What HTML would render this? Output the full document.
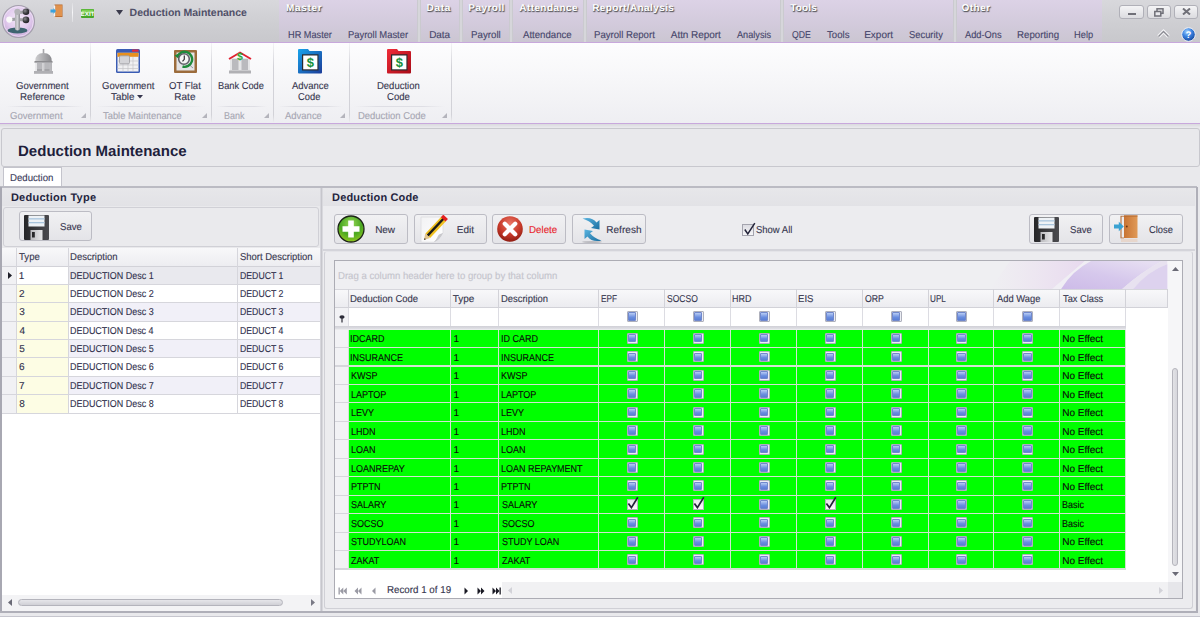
<!DOCTYPE html>
<html><head><meta charset="utf-8"><style>
*{box-sizing:border-box;margin:0;padding:0}
html,body{width:1200px;height:617px;overflow:hidden}
body{position:relative;background:#e9e9ec;font-family:"Liberation Sans",sans-serif;text-rendering:geometricPrecision}
.a{position:absolute}
.t{position:absolute;white-space:nowrap;line-height:1;-webkit-text-stroke:0.12px currentColor}
.grp{position:absolute;top:0;height:42px;background:linear-gradient(#dcd2e6,#d2cadb 60%,#cbc6d2)}
.gsep{position:absolute;top:0;height:42px;width:4px;background:linear-gradient(90deg,#c4c4c9,#dcdce0 50%,#c4c4c9)}
.rsep{position:absolute;top:43px;width:1px;height:80px;background:linear-gradient(#f4f4f6,#d2d2d8 30%,#d2d2d8 90%,#f0f0f2)}
.rfl{position:absolute;top:106px;height:1px;background:linear-gradient(90deg,rgba(222,222,228,0),#dedee4 25%,#dedee4 75%,rgba(222,222,228,0))}
.btn{position:absolute;border:1px solid #bcbcc4;border-radius:3px;background:linear-gradient(#f1f1f3,#e4e4e8)}
</style></head><body>
<div class="a" style="left:0;top:0;width:1200px;height:42px;background:linear-gradient(#d8d8dc,#cfcfd3 50%,#c8c8cc)"></div>
<div class="grp" style="left:279px;width:138px"></div>
<div class="gsep" style="left:417px"></div>
<div class="grp" style="left:421px;width:38px"></div>
<div class="gsep" style="left:459px"></div>
<div class="grp" style="left:463px;width:46px"></div>
<div class="gsep" style="left:509px"></div>
<div class="grp" style="left:513px;width:70px"></div>
<div class="gsep" style="left:583px"></div>
<div class="grp" style="left:587px;width:193px"></div>
<div class="gsep" style="left:780px"></div>
<div class="grp" style="left:784px;width:169px"></div>
<div class="gsep" style="left:953px"></div>
<div class="grp" style="left:957px;width:145px"></div>
<div class="t" style="left:285.95px;top:3.90px;font-size:10px;color:#ffffff;letter-spacing:0.71px;font-weight:bold;-webkit-text-stroke:0;text-shadow:0.5px 1px 1px #5a5a60,1px 0.5px 1px #7a7a80">Master</div>
<div class="t" style="left:426.45px;top:3.90px;font-size:10px;color:#ffffff;letter-spacing:0.77px;font-weight:bold;-webkit-text-stroke:0;text-shadow:0.5px 1px 1px #5a5a60,1px 0.5px 1px #7a7a80">Data</div>
<div class="t" style="left:468.35px;top:3.90px;font-size:10px;color:#ffffff;letter-spacing:0.45px;font-weight:bold;-webkit-text-stroke:0;text-shadow:0.5px 1px 1px #5a5a60,1px 0.5px 1px #7a7a80">Payroll</div>
<div class="t" style="left:519.25px;top:3.90px;font-size:10px;color:#ffffff;letter-spacing:0.42px;font-weight:bold;-webkit-text-stroke:0;text-shadow:0.5px 1px 1px #5a5a60,1px 0.5px 1px #7a7a80">Attendance</div>
<div class="t" style="left:592.15px;top:3.90px;font-size:10px;color:#ffffff;letter-spacing:0.40px;font-weight:bold;-webkit-text-stroke:0;text-shadow:0.5px 1px 1px #5a5a60,1px 0.5px 1px #7a7a80">Report/Analysis</div>
<div class="t" style="left:790.30px;top:3.90px;font-size:10px;color:#ffffff;letter-spacing:0.15px;font-weight:bold;-webkit-text-stroke:0;text-shadow:0.5px 1px 1px #5a5a60,1px 0.5px 1px #7a7a80">Tools</div>
<div class="t" style="left:961.60px;top:3.90px;font-size:10px;color:#ffffff;letter-spacing:0.46px;font-weight:bold;-webkit-text-stroke:0;text-shadow:0.5px 1px 1px #5a5a60,1px 0.5px 1px #7a7a80">Other</div>
<div class="t" style="left:287.96px;top:30.50px;font-size:10px;color:#45456a;transform:scaleX(0.919);transform-origin:0 0">HR Master</div>
<div class="t" style="left:347.55px;top:30.50px;font-size:10px;color:#45456a;transform:scaleX(0.940);transform-origin:0 0">Payroll Master</div>
<div class="t" style="left:429.20px;top:30.50px;font-size:10px;color:#45456a;letter-spacing:-0.10px">Data</div>
<div class="t" style="left:471.22px;top:30.50px;font-size:10px;color:#45456a;transform:scaleX(0.973);transform-origin:0 0">Payroll</div>
<div class="t" style="left:522.50px;top:30.50px;font-size:10px;color:#45456a;transform:scaleX(0.962);transform-origin:0 0">Attendance</div>
<div class="t" style="left:594.23px;top:30.50px;font-size:10px;color:#45456a;transform:scaleX(0.960);transform-origin:0 0">Payroll Report</div>
<div class="t" style="left:670.80px;top:30.50px;font-size:10px;color:#45456a;letter-spacing:-0.05px">Attn Report</div>
<div class="t" style="left:737.00px;top:30.50px;font-size:10px;color:#45456a;transform:scaleX(0.916);transform-origin:0 0">Analysis</div>
<div class="t" style="left:792.41px;top:30.50px;font-size:10px;color:#45456a;transform:scaleX(0.865);transform-origin:0 0">QDE</div>
<div class="t" style="left:827.01px;top:30.50px;font-size:10px;color:#45456a;transform:scaleX(0.965);transform-origin:0 0">Tools</div>
<div class="t" style="left:864.20px;top:30.50px;font-size:10px;color:#45456a;letter-spacing:0.00px">Export</div>
<div class="t" style="left:908.58px;top:30.50px;font-size:10px;color:#45456a;transform:scaleX(0.937);transform-origin:0 0">Security</div>
<div class="t" style="left:965.40px;top:30.50px;font-size:10px;color:#45456a;transform:scaleX(0.926);transform-origin:0 0">Add-Ons</div>
<div class="t" style="left:1017.22px;top:30.50px;font-size:10px;color:#45456a;transform:scaleX(0.969);transform-origin:0 0">Reporting</div>
<div class="t" style="left:1074.26px;top:30.50px;font-size:10px;color:#45456a;transform:scaleX(0.930);transform-origin:0 0">Help</div>
<svg class="a" style="left:0;top:2px" width="40" height="40" viewBox="0 2 40 40">
 <defs><radialGradient id="lg1" cx="0.5" cy="0.4" r="0.6"><stop offset="0" stop-color="#f4eaf8"/><stop offset="0.6" stop-color="#e2ccee"/><stop offset="0.9" stop-color="#cfb2de"/><stop offset="1" stop-color="#c2a6d2"/></radialGradient>
 <linearGradient id="lgt" x1="0" x2="1"><stop offset="0" stop-color="#b0b0b4"/><stop offset="0.5" stop-color="#d0d0d4"/><stop offset="1" stop-color="#8a8a90"/></linearGradient>
 <radialGradient id="lgd" cx="0.35" cy="0.35" r="0.7"><stop offset="0" stop-color="#8a8a8e"/><stop offset="0.6" stop-color="#3a3a3e"/><stop offset="1" stop-color="#202024"/></radialGradient></defs>
 <circle cx="18.5" cy="21.5" r="16" fill="url(#lg1)" stroke="#a4a0ac" stroke-width="1.1"/>
 <circle cx="18.5" cy="21.5" r="14.8" fill="none" stroke="#f6f0fa" stroke-width="0.8" opacity="0.8"/>
 <ellipse cx="17.5" cy="30.4" rx="9.9" ry="3" fill="#3e6470"/>
 <path d="M18 12.5 L25 12 M18 19.5 L25 20 M17 19 L10 19.8" stroke="#a2a2a6" stroke-width="3"/>
 <rect x="15" y="10.5" width="5" height="20" rx="2.5" fill="url(#lgt)"/>
 <circle cx="17.4" cy="11.8" r="3.1" fill="#b4b4b8"/>
 <circle cx="26" cy="11.8" r="3.3" fill="url(#lgd)"/>
 <circle cx="26" cy="19.9" r="3.3" fill="url(#lgd)"/>
 <circle cx="9.3" cy="19.6" r="3.1" fill="#fafafa"/>
</svg>
<svg class="a" style="left:50px;top:4px" width="14" height="15" viewBox="0 0 14 15">
 <rect x="4.5" y="0.5" width="8" height="12.5" fill="#b8682a"/>
 <rect x="5.5" y="1.2" width="6.5" height="11" fill="#e0924e"/>
 <rect x="3.8" y="1.5" width="1.5" height="11" fill="#f2f2f4"/>
 <path d="M0.5 5.5 H3.5 V4 L6 7 L3.5 10 V8.5 H0.5 Z" fill="#3aa2dc"/>
 <rect x="4.5" y="13.2" width="8" height="1.5" fill="#e8cdb8" opacity="0.6"/>
</svg>
<div class="a" style="left:72px;top:3px;width:1px;height:19px;background:linear-gradient(#dcdce0,#f6f6f8 50%,#dcdce0)"></div>
<svg class="a" style="left:80.5px;top:8.5px" width="13" height="9" viewBox="0 0 13 9">
 <rect x="0" y="0" width="13" height="9" rx="1" fill="#46a82a"/><rect x="0.6" y="0.6" width="11.8" height="4" fill="#7cd050"/>
 <text x="6.5" y="7.3" font-size="6.3" font-weight="bold" fill="#fff" text-anchor="middle" font-family="Liberation Sans">EXIT</text>
</svg>
<svg class="a" style="left:115.5px;top:9.5px" width="7" height="5" viewBox="0 0 7 5"><path d="M0 0 H7 L3.5 5 Z" fill="#3a3a4c"/></svg>
<div class="t" style="left:129.62px;top:8.00px;font-size:10.5px;color:#505068;letter-spacing:-0.03px;font-weight:bold;-webkit-text-stroke:0">Deduction Maintenance</div>
<div class="a" style="left:1119px;top:5px;width:25px;height:13.5px;border:1px solid #b0b0b8;border-radius:3px;background:linear-gradient(#f4f4f6,#dcdce0)"></div>
<div class="a" style="left:1146.5px;top:5px;width:24.5px;height:13.5px;border:1px solid #b0b0b8;border-radius:3px;background:linear-gradient(#f4f4f6,#dcdce0)"></div>
<div class="a" style="left:1174px;top:5px;width:24px;height:13.5px;border:1px solid #b0b0b8;border-radius:3px;background:linear-gradient(#f4f4f6,#dcdce0)"></div>
<div class="a" style="left:1128px;top:12.5px;width:8px;height:2.2px;background:#707078"></div>
<svg class="a" style="left:1154px;top:7.5px" width="10" height="9" viewBox="0 0 10 9"><rect x="3" y="0.8" width="6" height="4.5" fill="none" stroke="#707078" stroke-width="1.5"/><rect x="0.8" y="3.5" width="6" height="4.5" fill="#e8e8ec" stroke="#707078" stroke-width="1.5"/></svg>
<svg class="a" style="left:1182px;top:8px" width="9" height="7" viewBox="0 0 9 7"><path d="M1 0.5 L8 6.5 M8 0.5 L1 6.5" stroke="#707078" stroke-width="2"/></svg>
<svg class="a" style="left:1157px;top:29px" width="13" height="9" viewBox="0 0 13 9"><path d="M1.5 7.5 L6.5 2.5 L11.5 7.5" stroke="#f6f6f8" stroke-width="3.4" fill="none"/><path d="M1.5 7.5 L6.5 2.5 L11.5 7.5" stroke="#8a8a92" stroke-width="1.4" fill="none"/></svg>
<svg class="a" style="left:1180.5px;top:26.5px" width="15" height="15" viewBox="0 0 15 15">
 <defs><radialGradient id="hlp" cx="0.4" cy="0.3" r="0.7"><stop offset="0" stop-color="#a0d0ff"/><stop offset="0.5" stop-color="#3a82e0"/><stop offset="1" stop-color="#1a4aa0"/></radialGradient></defs>
 <circle cx="7.5" cy="7.5" r="6.8" fill="url(#hlp)" stroke="#f0f0f4" stroke-width="1"/>
 <text x="7.5" y="11" font-size="9.5" font-weight="bold" fill="#fff" text-anchor="middle" font-family="Liberation Sans">?</text>
</svg>
<div class="a" style="left:0;top:42px;width:1200px;height:1px;background:#c8a8dc"></div>
<div class="a" style="left:0;top:43px;width:1200px;height:80px;background:linear-gradient(#fdfdfe,#f6f6f8 50%,#eeeef2)"></div>
<div class="a" style="left:0;top:123px;width:1200px;height:1px;background:#c8a8dc"></div>
<div class="rsep" style="left:89.5px"></div>
<div class="rsep" style="left:210.5px"></div>
<div class="rsep" style="left:272.5px"></div>
<div class="rsep" style="left:348.5px"></div>
<div class="rsep" style="left:450.5px"></div>
<div class="rfl" style="left:6px;width:78px"></div>
<div class="rfl" style="left:95px;width:110px"></div>
<div class="rfl" style="left:216px;width:51px"></div>
<div class="rfl" style="left:278px;width:65px"></div>
<div class="rfl" style="left:354px;width:91px"></div>
<div class="t" style="left:16.42px;top:81.60px;font-size:10px;color:#36364e;transform:scaleX(0.957);transform-origin:0 0">Government</div>
<div class="t" style="left:19.72px;top:92.90px;font-size:10px;color:#36364e;transform:scaleX(0.972);transform-origin:0 0">Reference</div>
<div class="t" style="left:102.02px;top:81.60px;font-size:10px;color:#36364e;transform:scaleX(0.951);transform-origin:0 0">Government</div>
<div class="t" style="left:111.40px;top:92.90px;font-size:10px;color:#36364e;transform:scaleX(0.983);transform-origin:0 0">Table</div>
<svg class="a" style="left:137px;top:94.5px" width="6" height="4" viewBox="0 0 6 4"><path d="M0 0 H6 L3 3.5 Z" fill="#36364e"/></svg>
<div class="t" style="left:169.17px;top:81.60px;font-size:10px;color:#36364e;transform:scaleX(0.959);transform-origin:0 0">OT Flat</div>
<div class="t" style="left:174.20px;top:92.90px;font-size:10px;color:#36364e;letter-spacing:0.07px">Rate</div>
<div class="t" style="left:217.56px;top:81.60px;font-size:10px;color:#36364e;transform:scaleX(0.928);transform-origin:0 0">Bank Code</div>
<div class="t" style="left:291.70px;top:81.60px;font-size:10px;color:#36364e;transform:scaleX(0.945);transform-origin:0 0">Advance</div>
<div class="t" style="left:298.03px;top:92.90px;font-size:10px;color:#36364e;transform:scaleX(0.935);transform-origin:0 0">Code</div>
<div class="t" style="left:376.94px;top:81.60px;font-size:10px;color:#36364e;transform:scaleX(0.948);transform-origin:0 0">Deduction</div>
<div class="t" style="left:386.52px;top:92.90px;font-size:10px;color:#36364e;transform:scaleX(0.957);transform-origin:0 0">Code</div>
<div class="t" style="left:10.42px;top:112.20px;font-size:10px;color:#a6a6b2;transform:scaleX(0.955);transform-origin:0 0">Government</div>
<div class="t" style="left:103.31px;top:112.20px;font-size:10px;color:#a6a6b2;transform:scaleX(0.938);transform-origin:0 0">Table Maintenance</div>
<div class="t" style="left:223.88px;top:112.20px;font-size:10px;color:#a6a6b2;transform:scaleX(0.900);transform-origin:0 0">Bank</div>
<div class="t" style="left:285.40px;top:112.20px;font-size:10px;color:#a6a6b2;transform:scaleX(0.948);transform-origin:0 0">Advance</div>
<div class="t" style="left:357.74px;top:112.20px;font-size:10px;color:#a6a6b2;transform:scaleX(0.946);transform-origin:0 0">Deduction Code</div>
<svg class="a" style="left:80.5px;top:113px" width="5" height="5"><path d="M5 0 V5 H0 Z" fill="#b4b4bc"/></svg>
<svg class="a" style="left:202px;top:113px" width="5" height="5"><path d="M5 0 V5 H0 Z" fill="#b4b4bc"/></svg>
<svg class="a" style="left:264px;top:113px" width="5" height="5"><path d="M5 0 V5 H0 Z" fill="#b4b4bc"/></svg>
<svg class="a" style="left:340px;top:113px" width="5" height="5"><path d="M5 0 V5 H0 Z" fill="#b4b4bc"/></svg>
<svg class="a" style="left:442px;top:113px" width="5" height="5"><path d="M5 0 V5 H0 Z" fill="#b4b4bc"/></svg>
<svg class="a" style="left:33.5px;top:49px" width="19" height="25" viewBox="0 0 19 25">
 <defs><linearGradient id="gdm" x1="0" x2="1"><stop offset="0" stop-color="#cfcfd1"/><stop offset="0.5" stop-color="#acacaf"/><stop offset="1" stop-color="#8a8a8e"/></linearGradient>
 <linearGradient id="gcl" x1="0" x2="1"><stop offset="0" stop-color="#ececee"/><stop offset="1" stop-color="#b4b4b8"/></linearGradient></defs>
 <rect x="8.7" y="0" width="1.6" height="5" fill="#a6a6aa"/>
 <path d="M1.2 12.5 Q1.2 4 9.5 4 Q17.8 4 17.8 12.5 Z" fill="url(#gdm)"/>
 <rect x="0.5" y="12" width="18" height="1.8" fill="#8c8c90"/>
 <rect x="1" y="13.8" width="17" height="8.5" fill="url(#gcl)"/>
 <rect x="3" y="14" width="5" height="8" fill="#b8b8bc"/>
 <rect x="10.5" y="14" width="5" height="8" fill="#b8b8bc"/>
 <rect x="3" y="20.5" width="5" height="1" fill="#909094"/><rect x="10.5" y="20.5" width="5" height="1" fill="#909094"/>
 <rect x="0" y="22" width="19" height="2.8" fill="#b0b0b4"/>
</svg>
<svg class="a" style="left:116px;top:49px" width="24" height="24" viewBox="0 0 24 24">
 <rect x="0" y="0" width="24" height="24" rx="1.5" fill="#3a5cb4"/>
 <rect x="16" y="0.5" width="6.5" height="2.2" fill="#e42a3c"/>
 <rect x="1.5" y="3.8" width="21" height="18.7" fill="#f0f0f2"/>
 <rect x="1.5" y="3.8" width="21" height="4" fill="#e8901e"/>
 <path d="M1.5 12 H22.5 M1.5 16 H22.5 M1.5 19.5 H22.5 M7 8 V22.5 M12 8 V22.5 M17 8 V22.5" stroke="#c4c4c8" stroke-width="0.7"/>
 <rect x="3.5" y="6.8" width="10" height="8" rx="1.2" fill="#d4d4d8" stroke="#9a9aa0" stroke-width="0.8"/>
</svg>
<svg class="a" style="left:174px;top:50px" width="23" height="23" viewBox="0 0 23 23">
 <rect x="0" y="0" width="23" height="23" rx="1" fill="#9c6c3c"/>
 <rect x="2.5" y="2.5" width="18" height="18" fill="#e4e4e6"/>
 <path d="M15.5 15 L19 18" stroke="#9a9aa0" stroke-width="1"/>
 <path d="M3.5 7 A7.5 7.5 0 1 1 8.5 16.5" stroke="#1e8a3a" stroke-width="2.4" fill="none"/>
 <path d="M0.5 5.5 L5 3.5 L5 9 Z" fill="#1e8a3a"/>
 <circle cx="10" cy="9" r="5.3" fill="#f6f6f6" stroke="#606068" stroke-width="1.6"/>
 <path d="M10.3 5.5 V9.3 L8.5 11.3" stroke="#333" stroke-width="1.2" fill="none"/>
</svg>
<svg class="a" style="left:228px;top:49px" width="24" height="25" viewBox="0 0 24 25">
 <rect x="2" y="9" width="20" height="13" fill="#e6e6e8"/>
 <rect x="4" y="10" width="6.5" height="11" fill="#bababe"/>
 <rect x="13.5" y="10" width="6.5" height="11" fill="#bababe"/>
 <rect x="1" y="21.5" width="22" height="3" fill="#b0b0b4"/>
 <path d="M1 10 L12 3.5 L23 10" stroke="#e02030" stroke-width="1.9" fill="none"/>
 <text x="12" y="10.5" font-size="10.5" font-weight="bold" fill="#2aa83a" text-anchor="middle" font-family="Liberation Sans">$</text>
</svg>
<svg class="a" style="left:298px;top:49px" width="24" height="25" viewBox="0 0 24 25">
 <defs><linearGradient id="adv" x1="0" y1="0" x2="1" y2="1"><stop offset="0" stop-color="#18a4ec"/><stop offset="1" stop-color="#1c3c98"/></linearGradient></defs>
 <path d="M0 1 Q0 0 1 0 H10 L11.5 2 H23 Q24 2 24 3 V23.5 Q24 24.5 23 24.5 H1 Q0 24.5 0 23.5 Z" fill="url(#adv)"/>
 <rect x="4" y="5.3" width="16.5" height="16.2" fill="#2a2a2e"/>
 <rect x="5.2" y="6.5" width="14.2" height="13.8" fill="#fff"/>
 <text x="12.3" y="18.3" font-size="13" font-weight="bold" fill="#15913a" text-anchor="middle" font-family="Liberation Sans">$</text>
</svg>
<svg class="a" style="left:387px;top:49px" width="24" height="25" viewBox="0 0 24 25">
 <defs><linearGradient id="ded" x1="0" y1="0" x2="1" y2="1"><stop offset="0" stop-color="#f02c38"/><stop offset="1" stop-color="#a80c18"/></linearGradient></defs>
 <path d="M0 1 Q0 0 1 0 H10 L11.5 2 H23 Q24 2 24 3 V23.5 Q24 24.5 23 24.5 H1 Q0 24.5 0 23.5 Z" fill="url(#ded)"/>
 <rect x="4" y="5.3" width="16.5" height="16.2" fill="#2a2a2e"/>
 <rect x="5.2" y="6.5" width="14.2" height="13.8" fill="#fff"/>
 <text x="12.3" y="18.3" font-size="13" font-weight="bold" fill="#15913a" text-anchor="middle" font-family="Liberation Sans">$</text>
</svg>
<div class="a" style="left:0;top:124px;width:1200px;height:493px;background:#e9e9ec"></div>
<div class="a" style="left:0;top:124px;width:1200px;height:3px;background:linear-gradient(#dadade,#e6e6ea)"></div>
<div class="a" style="left:1px;top:127.5px;width:1198.5px;height:39.2px;border:1px solid #c8c8ce;border-radius:3px;background:#e9e9ec"></div>
<div class="t" style="left:18.02px;top:144.20px;font-size:15px;color:#1e1e3c;letter-spacing:0.01px;font-weight:bold;-webkit-text-stroke:0">Deduction Maintenance</div>
<div class="a" style="left:3.3px;top:167.3px;width:58.5px;height:20px;border:1px solid #c4c4cc;border-bottom:none;background:#fff"></div>
<div class="t" style="left:10.23px;top:173.60px;font-size:10px;color:#3a3a5a;transform:scaleX(0.964);transform-origin:0 0">Deduction</div>
<div class="a" style="left:0;top:186px;width:1197px;height:2px;background:#bbbbc3"></div>
<div class="a" style="left:0;top:187px;width:2px;height:426px;background:#a8a8b2"></div>
<div class="a" style="left:0;top:611px;width:1197.5px;height:2px;background:#afafb8"></div>
<div class="a" style="left:0;top:616.2px;width:1200px;height:0.8px;background:#c6c6ce"></div>
<div class="a" style="left:1195.5px;top:187px;width:2px;height:426px;background:#afafb8"></div>
<div class="a" style="left:321px;top:188px;width:1.4px;height:423px;background:#c6c6cc"></div>
<div class="a" style="left:2px;top:188px;width:318.5px;height:423px;background:#fff;border-right:1px solid #d6d6dc"></div>
<div class="a" style="left:2px;top:188px;width:317.5px;height:18px;background:linear-gradient(#e7e7ea,#e2e2e6)"></div>
<div class="t" style="left:10.88px;top:193.00px;font-size:11px;color:#24243e;letter-spacing:0.27px;font-weight:bold;-webkit-text-stroke:0">Deduction Type</div>
<div class="a" style="left:2px;top:206px;width:317.5px;height:41.5px;background:#e9e9ec"></div>
<div class="a" style="left:3px;top:207px;width:316px;height:40px;border:1px solid #d0d0d6;border-radius:3px;background:#eaeaed"></div>
<div class="btn" style="left:18.6px;top:211.2px;width:73.8px;height:30.3px"></div>
<svg class="a" style="left:23.7px;top:214.5px" width="25" height="25" viewBox="0 0 25 25">
 <defs><linearGradient id="svg1" x1="0" x2="1"><stop offset="0" stop-color="#262628"/><stop offset="0.6" stop-color="#3e3e42"/><stop offset="1" stop-color="#4a4a4e"/></linearGradient>
 <linearGradient id="svl1" x1="0" x2="1"><stop offset="0" stop-color="#b8b8bc"/><stop offset="1" stop-color="#e8e8ea"/></linearGradient></defs>
 <path d="M0 1 Q0 0 1 0 H24 Q25 0 25 1 V24 Q25 25 24 25 H1 Q0 25 0 24 Z" fill="url(#svg1)"/>
 <rect x="4.5" y="0.5" width="16" height="11" fill="#eef2f6"/>
 <rect x="4.5" y="3.2" width="16" height="1.3" fill="#a8c4dc"/>
 <rect x="4.5" y="7" width="16" height="1.3" fill="#a8c4dc"/>
 <rect x="6.5" y="15" width="12" height="10" fill="url(#svl1)"/>
 <rect x="8" y="17" width="2.8" height="5.5" fill="#262628"/>
</svg>
<div class="t" style="left:59.57px;top:223.00px;font-size:10px;color:#36364e;transform:scaleX(0.957);transform-origin:0 0">Save</div>
<div class="a" style="left:2px;top:247.5px;width:318px;height:19px;background:linear-gradient(#f8f8fa,#ededf1);border-bottom:1px solid #d2d2d8"></div>
<div class="a" style="left:16px;top:247.5px;width:1px;height:19px;background:#d6d6dc"></div>
<div class="a" style="left:67.5px;top:247.5px;width:1px;height:19px;background:#d6d6dc"></div>
<div class="a" style="left:237px;top:247.5px;width:1px;height:19px;background:#d6d6dc"></div>
<div class="t" style="left:19.11px;top:252.70px;font-size:10px;color:#36364e;transform:scaleX(0.960);transform-origin:0 0">Type</div>
<div class="t" style="left:69.74px;top:252.70px;font-size:10px;color:#36364e;transform:scaleX(0.952);transform-origin:0 0">Description</div>
<div class="t" style="left:240.07px;top:252.70px;font-size:10px;color:#36364e;transform:scaleX(0.946);transform-origin:0 0">Short Description</div>
<div class="a" style="left:2px;top:266.50px;width:14px;height:18.39px;background:#f1f1f4;border-bottom:1px solid #d6d6dc"></div>
<div class="a" style="left:17px;top:266.50px;width:50.5px;height:18.39px;background:#ffffff;border-bottom:1px solid #d6d6dc"></div>
<div class="a" style="left:68.5px;top:266.50px;width:251.5px;height:18.39px;background:#e9e9ee;border-bottom:1px solid #d6d6dc"></div>
<div class="a" style="left:16px;top:266.50px;width:1px;height:18.39px;background:#d6d6dc"></div>
<div class="a" style="left:67.5px;top:266.50px;width:1px;height:18.39px;background:#d6d6dc"></div>
<div class="a" style="left:237px;top:266.50px;width:1px;height:18.39px;background:#d6d6dc"></div>
<div class="t" style="left:18.85px;top:271.50px;font-size:10px;color:#30304c">1</div>
<div class="t" style="left:70.08px;top:271.50px;font-size:10px;color:#30304c;transform:scaleX(0.897);transform-origin:0 0">DEDUCTION Desc 1</div>
<div class="t" style="left:239.90px;top:271.50px;font-size:10px;color:#30304c;transform:scaleX(0.871);transform-origin:0 0">DEDUCT 1</div>
<div class="a" style="left:2px;top:284.89px;width:14px;height:18.39px;background:#f1f1f4;border-bottom:1px solid #d6d6dc"></div>
<div class="a" style="left:17px;top:284.89px;width:50.5px;height:18.39px;background:#fdfde4;border-bottom:1px solid #d6d6dc"></div>
<div class="a" style="left:68.5px;top:284.89px;width:251.5px;height:18.39px;background:#ffffff;border-bottom:1px solid #d6d6dc"></div>
<div class="a" style="left:16px;top:284.89px;width:1px;height:18.39px;background:#d6d6dc"></div>
<div class="a" style="left:67.5px;top:284.89px;width:1px;height:18.39px;background:#d6d6dc"></div>
<div class="a" style="left:237px;top:284.89px;width:1px;height:18.39px;background:#d6d6dc"></div>
<div class="t" style="left:19.10px;top:289.88px;font-size:10px;color:#30304c">2</div>
<div class="t" style="left:70.08px;top:289.88px;font-size:10px;color:#30304c;transform:scaleX(0.897);transform-origin:0 0">DEDUCTION Desc 2</div>
<div class="t" style="left:239.90px;top:289.88px;font-size:10px;color:#30304c;transform:scaleX(0.872);transform-origin:0 0">DEDUCT 2</div>
<div class="a" style="left:2px;top:303.28px;width:14px;height:18.39px;background:#f1f1f4;border-bottom:1px solid #d6d6dc"></div>
<div class="a" style="left:17px;top:303.28px;width:50.5px;height:18.39px;background:#fdfde4;border-bottom:1px solid #d6d6dc"></div>
<div class="a" style="left:68.5px;top:303.28px;width:251.5px;height:18.39px;background:#f1f0f8;border-bottom:1px solid #d6d6dc"></div>
<div class="a" style="left:16px;top:303.28px;width:1px;height:18.39px;background:#d6d6dc"></div>
<div class="a" style="left:67.5px;top:303.28px;width:1px;height:18.39px;background:#d6d6dc"></div>
<div class="a" style="left:237px;top:303.28px;width:1px;height:18.39px;background:#d6d6dc"></div>
<div class="t" style="left:19.20px;top:308.27px;font-size:10px;color:#30304c">3</div>
<div class="t" style="left:70.08px;top:308.27px;font-size:10px;color:#30304c;transform:scaleX(0.896);transform-origin:0 0">DEDUCTION Desc 3</div>
<div class="t" style="left:239.90px;top:308.27px;font-size:10px;color:#30304c;transform:scaleX(0.870);transform-origin:0 0">DEDUCT 3</div>
<div class="a" style="left:2px;top:321.67px;width:14px;height:18.39px;background:#f1f1f4;border-bottom:1px solid #d6d6dc"></div>
<div class="a" style="left:17px;top:321.67px;width:50.5px;height:18.39px;background:#fdfde4;border-bottom:1px solid #d6d6dc"></div>
<div class="a" style="left:68.5px;top:321.67px;width:251.5px;height:18.39px;background:#ffffff;border-bottom:1px solid #d6d6dc"></div>
<div class="a" style="left:16px;top:321.67px;width:1px;height:18.39px;background:#d6d6dc"></div>
<div class="a" style="left:67.5px;top:321.67px;width:1px;height:18.39px;background:#d6d6dc"></div>
<div class="a" style="left:237px;top:321.67px;width:1px;height:18.39px;background:#d6d6dc"></div>
<div class="t" style="left:19.40px;top:326.67px;font-size:10px;color:#30304c">4</div>
<div class="t" style="left:70.08px;top:326.67px;font-size:10px;color:#30304c;transform:scaleX(0.895);transform-origin:0 0">DEDUCTION Desc 4</div>
<div class="t" style="left:239.91px;top:326.67px;font-size:10px;color:#30304c;transform:scaleX(0.868);transform-origin:0 0">DEDUCT 4</div>
<div class="a" style="left:2px;top:340.06px;width:14px;height:18.39px;background:#f1f1f4;border-bottom:1px solid #d6d6dc"></div>
<div class="a" style="left:17px;top:340.06px;width:50.5px;height:18.39px;background:#fdfde4;border-bottom:1px solid #d6d6dc"></div>
<div class="a" style="left:68.5px;top:340.06px;width:251.5px;height:18.39px;background:#f1f0f8;border-bottom:1px solid #d6d6dc"></div>
<div class="a" style="left:16px;top:340.06px;width:1px;height:18.39px;background:#d6d6dc"></div>
<div class="a" style="left:67.5px;top:340.06px;width:1px;height:18.39px;background:#d6d6dc"></div>
<div class="a" style="left:237px;top:340.06px;width:1px;height:18.39px;background:#d6d6dc"></div>
<div class="t" style="left:19.20px;top:345.06px;font-size:10px;color:#30304c">5</div>
<div class="t" style="left:70.08px;top:345.06px;font-size:10px;color:#30304c;transform:scaleX(0.896);transform-origin:0 0">DEDUCTION Desc 5</div>
<div class="t" style="left:239.90px;top:345.06px;font-size:10px;color:#30304c;transform:scaleX(0.870);transform-origin:0 0">DEDUCT 5</div>
<div class="a" style="left:2px;top:358.45px;width:14px;height:18.39px;background:#f1f1f4;border-bottom:1px solid #d6d6dc"></div>
<div class="a" style="left:17px;top:358.45px;width:50.5px;height:18.39px;background:#fdfde4;border-bottom:1px solid #d6d6dc"></div>
<div class="a" style="left:68.5px;top:358.45px;width:251.5px;height:18.39px;background:#ffffff;border-bottom:1px solid #d6d6dc"></div>
<div class="a" style="left:16px;top:358.45px;width:1px;height:18.39px;background:#d6d6dc"></div>
<div class="a" style="left:67.5px;top:358.45px;width:1px;height:18.39px;background:#d6d6dc"></div>
<div class="a" style="left:237px;top:358.45px;width:1px;height:18.39px;background:#d6d6dc"></div>
<div class="t" style="left:19.10px;top:363.44px;font-size:10px;color:#30304c">6</div>
<div class="t" style="left:70.08px;top:363.44px;font-size:10px;color:#30304c;transform:scaleX(0.896);transform-origin:0 0">DEDUCTION Desc 6</div>
<div class="t" style="left:239.90px;top:363.44px;font-size:10px;color:#30304c;transform:scaleX(0.870);transform-origin:0 0">DEDUCT 6</div>
<div class="a" style="left:2px;top:376.84px;width:14px;height:18.39px;background:#f1f1f4;border-bottom:1px solid #d6d6dc"></div>
<div class="a" style="left:17px;top:376.84px;width:50.5px;height:18.39px;background:#fdfde4;border-bottom:1px solid #d6d6dc"></div>
<div class="a" style="left:68.5px;top:376.84px;width:251.5px;height:18.39px;background:#f1f0f8;border-bottom:1px solid #d6d6dc"></div>
<div class="a" style="left:16px;top:376.84px;width:1px;height:18.39px;background:#d6d6dc"></div>
<div class="a" style="left:67.5px;top:376.84px;width:1px;height:18.39px;background:#d6d6dc"></div>
<div class="a" style="left:237px;top:376.84px;width:1px;height:18.39px;background:#d6d6dc"></div>
<div class="t" style="left:19.10px;top:381.84px;font-size:10px;color:#30304c">7</div>
<div class="t" style="left:70.08px;top:381.84px;font-size:10px;color:#30304c;transform:scaleX(0.897);transform-origin:0 0">DEDUCTION Desc 7</div>
<div class="t" style="left:239.90px;top:381.84px;font-size:10px;color:#30304c;transform:scaleX(0.872);transform-origin:0 0">DEDUCT 7</div>
<div class="a" style="left:2px;top:395.23px;width:14px;height:18.39px;background:#f1f1f4;border-bottom:1px solid #d6d6dc"></div>
<div class="a" style="left:17px;top:395.23px;width:50.5px;height:18.39px;background:#fdfde4;border-bottom:1px solid #d6d6dc"></div>
<div class="a" style="left:68.5px;top:395.23px;width:251.5px;height:18.39px;background:#ffffff;border-bottom:1px solid #d6d6dc"></div>
<div class="a" style="left:16px;top:395.23px;width:1px;height:18.39px;background:#d6d6dc"></div>
<div class="a" style="left:67.5px;top:395.23px;width:1px;height:18.39px;background:#d6d6dc"></div>
<div class="a" style="left:237px;top:395.23px;width:1px;height:18.39px;background:#d6d6dc"></div>
<div class="t" style="left:19.15px;top:400.23px;font-size:10px;color:#30304c">8</div>
<div class="t" style="left:70.08px;top:400.23px;font-size:10px;color:#30304c;transform:scaleX(0.896);transform-origin:0 0">DEDUCTION Desc 8</div>
<div class="t" style="left:239.90px;top:400.23px;font-size:10px;color:#30304c;transform:scaleX(0.870);transform-origin:0 0">DEDUCT 8</div>
<svg class="a" style="left:8px;top:272px" width="4" height="7"><path d="M0 0 L4 3.5 L0 7 Z" fill="#1e1e28"/></svg>
<div class="a" style="left:2px;top:595px;width:318px;height:16px;background:#f3f3f5"></div>
<svg class="a" style="left:8px;top:599px" width="4" height="7"><path d="M4 0 L0 3.5 L4 7 Z" fill="#6a6a76"/></svg>
<svg class="a" style="left:310.5px;top:599px" width="4" height="7"><path d="M0 0 L4 3.5 L0 7 Z" fill="#7a7a86"/></svg>
<div class="a" style="left:17.5px;top:598.8px;width:265.5px;height:6.8px;border:1px solid #b4b4bc;border-radius:4px;background:linear-gradient(#e6e6ea,#d0d0d6)"></div>
<div class="a" style="left:322.4px;top:188px;width:873.1px;height:423px;border-left:1px solid #d8d8dd;background:#ececef"></div>
<div class="a" style="left:323.4px;top:188px;width:872px;height:17.5px;background:linear-gradient(#e7e7ea,#e2e2e6)"></div>
<div class="t" style="left:332.09px;top:192.80px;font-size:11px;color:#24243e;letter-spacing:0.16px;font-weight:bold;-webkit-text-stroke:0">Deduction Code</div>
<div class="btn" style="left:334.4px;top:213.7px;width:73.9px;height:30px"></div>
<div class="btn" style="left:414px;top:213.7px;width:73.3px;height:30px"></div>
<div class="btn" style="left:492.1px;top:213.7px;width:74.3px;height:30px"></div>
<div class="btn" style="left:572.1px;top:213.7px;width:74.4px;height:30px"></div>
<div class="btn" style="left:1029.2px;top:213.7px;width:73.7px;height:30px"></div>
<div class="btn" style="left:1109px;top:213.7px;width:73.6px;height:30px"></div>
<svg class="a" style="left:337.3px;top:215px" width="28" height="28" viewBox="0 0 28 28">
 <defs><radialGradient id="gnew" cx="0.5" cy="0.3" r="0.75"><stop offset="0" stop-color="#98d858"/><stop offset="0.55" stop-color="#4aa822"/><stop offset="0.85" stop-color="#80c020"/><stop offset="1" stop-color="#e0f020"/></radialGradient></defs>
 <circle cx="14" cy="14" r="13" fill="url(#gnew)" stroke="#1c2418" stroke-width="1.3"/>
 <path d="M11.2 5.5 H16.8 V11.2 H22.5 V16.8 H16.8 V22.5 H11.2 V16.8 H5.5 V11.2 H11.2 Z" fill="#fff"/>
</svg>
<div class="t" style="left:375.20px;top:225.90px;font-size:10px;color:#36364e;letter-spacing:-0.12px">New</div>
<svg class="a" style="left:419.5px;top:214.8px" width="28" height="28" viewBox="0 0 28 28">
 <defs><linearGradient id="gpp" x1="0" y1="0" x2="1" y2="1"><stop offset="0" stop-color="#f2f2f4"/><stop offset="1" stop-color="#ffffff"/></linearGradient></defs>
 <path d="M1 2 H23 V18 L14 27.2 H1 Z" fill="url(#gpp)" stroke="#dcdce0" stroke-width="0.8"/>
 <path d="M23 18 Q18 19 17.5 22 Q16 25 14 27.2 Q20 25 23 18 Z" fill="#c8c8cc"/>
 <path d="M7.8 20.8 L23.6 4" stroke="#f0c020" stroke-width="6.4"/>
 <path d="M7.6 20.6 L23.4 3.8" stroke="#1a1a1a" stroke-width="2.4"/>
 <path d="M23.2 4.4 L25.6 1.8" stroke="#e42020" stroke-width="6.4"/>
 <path d="M5.3 18.3 L10 23 L4 25 Z" fill="#e2c48e"/>
 <path d="M4.7 23 L5.9 24.3 L4 25 Z" fill="#222"/>
</svg>
<div class="t" style="left:456.70px;top:225.90px;font-size:10px;color:#36364e;letter-spacing:0.05px">Edit</div>
<svg class="a" style="left:497px;top:215.5px" width="26" height="26" viewBox="0 0 26 26">
 <defs><radialGradient id="gdel" cx="0.5" cy="0.3" r="0.75"><stop offset="0" stop-color="#ec7868"/><stop offset="0.55" stop-color="#c83a2a"/><stop offset="1" stop-color="#86180e"/></radialGradient></defs>
 <circle cx="13" cy="13" r="12.8" fill="url(#gdel)"/>
 <path d="M7.8 7.8 L18.2 18.2 M18.2 7.8 L7.8 18.2" stroke="#fff" stroke-width="4.3" stroke-linecap="round"/>
</svg>
<div class="t" style="left:529.22px;top:225.90px;font-size:10px;color:#e81c2a;transform:scaleX(0.975);transform-origin:0 0">Delete</div>
<svg class="a" style="left:578.5px;top:215.5px" width="26" height="27" viewBox="0 0 26 27">
 <defs><linearGradient id="grf" x1="0" y1="0" x2="1" y2="1"><stop offset="0" stop-color="#5ab4e0"/><stop offset="1" stop-color="#1a6ea0"/></linearGradient></defs>
 <path d="M3.5 2.5 Q13 0.5 17.5 6.5 L20.5 4 L20.5 13.5 L12 12 L15 9.8 Q11 5 3.5 2.5 Z" fill="url(#grf)"/>
 <path d="M22.5 24.5 Q13 26.5 8.5 20.5 L5.5 23 L5.5 13.5 L14 15 L11 17.2 Q15 22 22.5 24.5 Z" fill="url(#grf)"/>
 <ellipse cx="13" cy="26" rx="10" ry="0.9" fill="#8a8a90" opacity="0.45"/>
</svg>
<div class="t" style="left:606.20px;top:225.90px;font-size:10px;color:#36364e;letter-spacing:0.07px">Refresh</div>
<div class="a" style="left:742.2px;top:224px;width:11.7px;height:11.6px;border:1px solid #a4a4ae;background:linear-gradient(#dcdce2,#f6f6f8)"></div>
<svg class="a" style="left:742.5px;top:221.5px" width="13" height="14" viewBox="0 0 13 14"><path d="M1.8 7.5 L4.8 12 L11.8 1.2" stroke="#24243a" stroke-width="1.5" fill="none"/></svg>
<div class="t" style="left:756.27px;top:226.00px;font-size:10px;color:#36364e;transform:scaleX(0.948);transform-origin:0 0">Show All</div>
<svg class="a" style="left:1034px;top:217px" width="25" height="25" viewBox="0 0 25 25">
 <defs><linearGradient id="svg2" x1="0" x2="1"><stop offset="0" stop-color="#262628"/><stop offset="0.6" stop-color="#3e3e42"/><stop offset="1" stop-color="#4a4a4e"/></linearGradient>
 <linearGradient id="svl2" x1="0" x2="1"><stop offset="0" stop-color="#b8b8bc"/><stop offset="1" stop-color="#e8e8ea"/></linearGradient></defs>
 <path d="M0 1 Q0 0 1 0 H24 Q25 0 25 1 V24 Q25 25 24 25 H1 Q0 25 0 24 Z" fill="url(#svg2)"/>
 <rect x="4.5" y="0.5" width="16" height="11" fill="#eef2f6"/>
 <rect x="4.5" y="3.2" width="16" height="1.3" fill="#a8c4dc"/>
 <rect x="4.5" y="7" width="16" height="1.3" fill="#a8c4dc"/>
 <rect x="6.5" y="15" width="12" height="10" fill="url(#svl2)"/>
 <rect x="8" y="17" width="2.8" height="5.5" fill="#262628"/>
</svg>
<div class="t" style="left:1069.57px;top:225.90px;font-size:10px;color:#36364e;transform:scaleX(0.957);transform-origin:0 0">Save</div>
<svg class="a" style="left:1114px;top:214.5px" width="25" height="28" viewBox="0 0 25 28">
 <defs><linearGradient id="gdr" x1="0" x2="1"><stop offset="0" stop-color="#c87434"/><stop offset="1" stop-color="#e09a58"/></linearGradient></defs>
 <rect x="6.5" y="0.8" width="3.5" height="22.5" fill="#b0642a"/>
 <rect x="7.5" y="1.6" width="2.8" height="21" fill="#ececf0"/>
 <path d="M10 0.5 H23.5 V23 H10 Z" fill="url(#gdr)"/>
 <rect x="10" y="0.5" width="13.5" height="1" fill="#b0642a"/>
 <circle cx="12.8" cy="11.5" r="0.9" fill="#6a3410"/>
 <path d="M0 9.5 H4.8 V6.8 L9.8 11.5 L4.8 16.2 V13.5 H0 Z" fill="#3aa2d2"/>
 <rect x="7" y="23.8" width="16.5" height="3.2" fill="#e8c4a8" opacity="0.45"/>
</svg>
<div class="t" style="left:1148.53px;top:225.90px;font-size:10px;color:#36364e;transform:scaleX(0.933);transform-origin:0 0">Close</div>
<div class="a" style="left:323.4px;top:249.2px;width:872px;height:1.6px;background:#d4d4da"></div>
<div class="a" style="left:323.6px;top:250.8px;width:869.9px;height:358.5px;border:1px solid #d0d0d6;border-top-color:#e4e4e8;border-radius:3px;background:#ececef"></div>
<div class="a" style="left:334px;top:260px;width:849px;height:339.3px;border:1.3px solid #acacb4;background:#fff"></div>
<div class="a" style="left:335.3px;top:261.3px;width:832.2px;height:28.2px;background:#efeff2"></div>
<svg class="a" style="left:990px;top:261.3px" width="177.5" height="28.2" viewBox="0 0 177.5 28.5" preserveAspectRatio="none">
 <defs>
 <linearGradient id="gpk" x1="0" x2="1"><stop offset="0" stop-color="#ecdcf0" stop-opacity="0"/><stop offset="1" stop-color="#e6d4ee" stop-opacity="0.8"/></linearGradient>
 <linearGradient id="gpb" x1="0" y1="1" x2="0.8" y2="0"><stop offset="0" stop-color="#cdbbe8"/><stop offset="0.5" stop-color="#d6c8ec"/><stop offset="1" stop-color="#e6def2"/></linearGradient>
 </defs>
 <path d="M0 28.5 L62 28.5 L95 0 L20 0 Z" fill="url(#gpk)"/>
 <path d="M62 28.5 L71 28.5 L101 0 L95 0 Z" fill="#f0eef4"/>
 <path d="M71 28.5 L132 28.5 Q150 12 172 0 L101 0 Q82 10 71 28.5 Z" fill="url(#gpb)"/>
 <path d="M132 28.5 L143 28.5 Q158 10 177.5 3 L177.5 0 L172 0 Q150 12 132 28.5 Z" fill="#e8e2f0"/>
 <path d="M143 28.5 L177.5 28.5 L177.5 3 Q158 10 143 28.5 Z" fill="#ddd2ee"/>
</svg>
<div class="t" style="left:337.73px;top:272.20px;font-size:10px;color:#c4c4cc;transform:scaleX(0.958);transform-origin:0 0">Drag a column header here to group by that column</div>
<div class="a" style="left:335.3px;top:289.3px;width:832.2px;height:19px;background:linear-gradient(#f8f8fa,#ececf0);border-top:1px solid #d6d6dc;border-bottom:1px solid #d2d2d8"></div>
<div class="a" style="left:347.8px;top:289.3px;width:1px;height:19px;background:#d2d2d8"></div>
<div class="a" style="left:449.8px;top:289.3px;width:1px;height:19px;background:#d2d2d8"></div>
<div class="a" style="left:497.8px;top:289.3px;width:1px;height:19px;background:#d2d2d8"></div>
<div class="a" style="left:597.8px;top:289.3px;width:1px;height:19px;background:#d2d2d8"></div>
<div class="a" style="left:664.0px;top:289.3px;width:1px;height:19px;background:#d2d2d8"></div>
<div class="a" style="left:730.0px;top:289.3px;width:1px;height:19px;background:#d2d2d8"></div>
<div class="a" style="left:796.0px;top:289.3px;width:1px;height:19px;background:#d2d2d8"></div>
<div class="a" style="left:862.0px;top:289.3px;width:1px;height:19px;background:#d2d2d8"></div>
<div class="a" style="left:927.8px;top:289.3px;width:1px;height:19px;background:#d2d2d8"></div>
<div class="a" style="left:993.4px;top:289.3px;width:1px;height:19px;background:#d2d2d8"></div>
<div class="a" style="left:1059.1px;top:289.3px;width:1px;height:19px;background:#d2d2d8"></div>
<div class="a" style="left:1125.1px;top:289.3px;width:1px;height:19px;background:#d2d2d8"></div>
<div class="a" style="left:1166.7px;top:289.3px;width:1px;height:19px;background:#d2d2d8"></div>
<div class="t" style="left:349.74px;top:295.00px;font-size:10px;color:#36364e;transform:scaleX(0.950);transform-origin:0 0">Deduction Code</div>
<div class="t" style="left:452.80px;top:295.00px;font-size:10px;color:#36364e;letter-spacing:-0.08px">Type</div>
<div class="t" style="left:500.55px;top:295.00px;font-size:10px;color:#36364e;transform:scaleX(0.941);transform-origin:0 0">Description</div>
<div class="t" style="left:600.64px;top:295.00px;font-size:10px;color:#36364e;transform:scaleX(0.822);transform-origin:0 0">EPF</div>
<div class="t" style="left:667.12px;top:295.00px;font-size:10px;color:#36364e;transform:scaleX(0.852);transform-origin:0 0">SOCSO</div>
<div class="t" style="left:732.28px;top:295.00px;font-size:10px;color:#36364e;transform:scaleX(0.897);transform-origin:0 0">HRD</div>
<div class="t" style="left:798.04px;top:295.00px;font-size:10px;color:#36364e;transform:scaleX(0.956);transform-origin:0 0">EIS</div>
<div class="t" style="left:864.61px;top:295.00px;font-size:10px;color:#36364e;transform:scaleX(0.870);transform-origin:0 0">ORP</div>
<div class="t" style="left:930.19px;top:295.00px;font-size:10px;color:#36364e;transform:scaleX(0.815);transform-origin:0 0">UPL</div>
<div class="t" style="left:996.70px;top:295.00px;font-size:10px;color:#36364e;transform:scaleX(0.937);transform-origin:0 0">Add Wage</div>
<div class="t" style="left:1062.61px;top:295.00px;font-size:10px;color:#36364e;transform:scaleX(0.928);transform-origin:0 0">Tax Class</div>
<div class="a" style="left:335.3px;top:308.3px;width:790.8px;height:17.8px;background:#fff"></div>
<div class="a" style="left:335.3px;top:308.3px;width:13px;height:17.8px;background:#f2f2f5"></div>
<div class="a" style="left:347.8px;top:308.3px;width:1px;height:17.8px;background:#dcdce2"></div>
<div class="a" style="left:449.8px;top:308.3px;width:1px;height:17.8px;background:#dcdce2"></div>
<div class="a" style="left:497.8px;top:308.3px;width:1px;height:17.8px;background:#dcdce2"></div>
<div class="a" style="left:597.8px;top:308.3px;width:1px;height:17.8px;background:#dcdce2"></div>
<div class="a" style="left:664.0px;top:308.3px;width:1px;height:17.8px;background:#dcdce2"></div>
<div class="a" style="left:730.0px;top:308.3px;width:1px;height:17.8px;background:#dcdce2"></div>
<div class="a" style="left:796.0px;top:308.3px;width:1px;height:17.8px;background:#dcdce2"></div>
<div class="a" style="left:862.0px;top:308.3px;width:1px;height:17.8px;background:#dcdce2"></div>
<div class="a" style="left:927.8px;top:308.3px;width:1px;height:17.8px;background:#dcdce2"></div>
<div class="a" style="left:993.4px;top:308.3px;width:1px;height:17.8px;background:#dcdce2"></div>
<div class="a" style="left:1059.1px;top:308.3px;width:1px;height:17.8px;background:#dcdce2"></div>
<div class="a" style="left:1125.1px;top:308.3px;width:1px;height:17.8px;background:#dcdce2"></div>
<div class="a" style="left:335.3px;top:326px;width:790.8px;height:3.6px;background:linear-gradient(#d0d0d6,#dcdce2 60%,#f0f0f2)"></div>
<svg class="a" style="left:338.5px;top:314.5px" width="6" height="8" viewBox="0 0 6 8"><ellipse cx="3" cy="2" rx="2.6" ry="1.8" fill="#2c2c38"/><rect x="2.4" y="2.5" width="1.2" height="5" fill="#2c2c38"/></svg>
<div class="a" style="left:626.50px;top:311.20px;width:11px;height:11px;border:1px solid #aeb0bc;border-radius:1px;background:#eceef4"><div style="position:absolute;left:1.3px;top:1.3px;width:6.4px;height:6.4px;background:linear-gradient(#b8ccf4,#6a8ee0 60%,#5a7ed4);box-shadow:0 0 0 0.7px #3c5cbc"></div></div>
<div class="a" style="left:692.60px;top:311.20px;width:11px;height:11px;border:1px solid #aeb0bc;border-radius:1px;background:#eceef4"><div style="position:absolute;left:1.3px;top:1.3px;width:6.4px;height:6.4px;background:linear-gradient(#b8ccf4,#6a8ee0 60%,#5a7ed4);box-shadow:0 0 0 0.7px #3c5cbc"></div></div>
<div class="a" style="left:758.60px;top:311.20px;width:11px;height:11px;border:1px solid #aeb0bc;border-radius:1px;background:#eceef4"><div style="position:absolute;left:1.3px;top:1.3px;width:6.4px;height:6.4px;background:linear-gradient(#b8ccf4,#6a8ee0 60%,#5a7ed4);box-shadow:0 0 0 0.7px #3c5cbc"></div></div>
<div class="a" style="left:824.60px;top:311.20px;width:11px;height:11px;border:1px solid #aeb0bc;border-radius:1px;background:#eceef4"><div style="position:absolute;left:1.3px;top:1.3px;width:6.4px;height:6.4px;background:linear-gradient(#b8ccf4,#6a8ee0 60%,#5a7ed4);box-shadow:0 0 0 0.7px #3c5cbc"></div></div>
<div class="a" style="left:890.50px;top:311.20px;width:11px;height:11px;border:1px solid #aeb0bc;border-radius:1px;background:#eceef4"><div style="position:absolute;left:1.3px;top:1.3px;width:6.4px;height:6.4px;background:linear-gradient(#b8ccf4,#6a8ee0 60%,#5a7ed4);box-shadow:0 0 0 0.7px #3c5cbc"></div></div>
<div class="a" style="left:956.20px;top:311.20px;width:11px;height:11px;border:1px solid #aeb0bc;border-radius:1px;background:#eceef4"><div style="position:absolute;left:1.3px;top:1.3px;width:6.4px;height:6.4px;background:linear-gradient(#b8ccf4,#6a8ee0 60%,#5a7ed4);box-shadow:0 0 0 0.7px #3c5cbc"></div></div>
<div class="a" style="left:1021.85px;top:311.20px;width:11px;height:11px;border:1px solid #aeb0bc;border-radius:1px;background:#eceef4"><div style="position:absolute;left:1.3px;top:1.3px;width:6.4px;height:6.4px;background:linear-gradient(#b8ccf4,#6a8ee0 60%,#5a7ed4);box-shadow:0 0 0 0.7px #3c5cbc"></div></div>
<div class="a" style="left:335.3px;top:329.6px;width:13px;height:239.48px;background:#f2f2f5"></div>
<div class="a" style="left:348.3px;top:329.6px;width:777.3px;height:239.48px;background:#00ff00"></div>
<div class="a" style="left:335.3px;top:346.96px;width:13px;height:1.1px;background:#d6d6dc"></div>
<div class="a" style="left:348.3px;top:346.96px;width:777.3px;height:1.1px;background:#d2e2d2"></div>
<div class="t" style="left:350.49px;top:335.28px;font-size:10px;color:#0a0a0a;transform:scaleX(0.899);transform-origin:0 0">IDCARD</div>
<div class="t" style="left:453.55px;top:335.28px;font-size:10px;color:#0a0a0a">1</div>
<div class="t" style="left:501.19px;top:335.28px;font-size:10px;color:#0a0a0a;transform:scaleX(0.899);transform-origin:0 0">ID CARD</div>
<div class="t" style="left:1062.20px;top:335.28px;font-size:10px;color:#0a0a0a;letter-spacing:-0.01px">No Effect</div>
<div class="a" style="left:626.50px;top:332.78px;width:11px;height:11px;border:1px solid #aeb0bc;border-radius:1px;background:#eceef4"><div style="position:absolute;left:1.3px;top:1.3px;width:6.4px;height:6.4px;background:linear-gradient(#b8ccf4,#6a8ee0 60%,#5a7ed4);box-shadow:0 0 0 0.7px #3c5cbc"></div></div>
<div class="a" style="left:692.60px;top:332.78px;width:11px;height:11px;border:1px solid #aeb0bc;border-radius:1px;background:#eceef4"><div style="position:absolute;left:1.3px;top:1.3px;width:6.4px;height:6.4px;background:linear-gradient(#b8ccf4,#6a8ee0 60%,#5a7ed4);box-shadow:0 0 0 0.7px #3c5cbc"></div></div>
<div class="a" style="left:758.60px;top:332.78px;width:11px;height:11px;border:1px solid #aeb0bc;border-radius:1px;background:#eceef4"><div style="position:absolute;left:1.3px;top:1.3px;width:6.4px;height:6.4px;background:linear-gradient(#b8ccf4,#6a8ee0 60%,#5a7ed4);box-shadow:0 0 0 0.7px #3c5cbc"></div></div>
<div class="a" style="left:824.60px;top:332.78px;width:11px;height:11px;border:1px solid #aeb0bc;border-radius:1px;background:#eceef4"><div style="position:absolute;left:1.3px;top:1.3px;width:6.4px;height:6.4px;background:linear-gradient(#b8ccf4,#6a8ee0 60%,#5a7ed4);box-shadow:0 0 0 0.7px #3c5cbc"></div></div>
<div class="a" style="left:890.50px;top:332.78px;width:11px;height:11px;border:1px solid #aeb0bc;border-radius:1px;background:#eceef4"><div style="position:absolute;left:1.3px;top:1.3px;width:6.4px;height:6.4px;background:linear-gradient(#b8ccf4,#6a8ee0 60%,#5a7ed4);box-shadow:0 0 0 0.7px #3c5cbc"></div></div>
<div class="a" style="left:956.20px;top:332.78px;width:11px;height:11px;border:1px solid #aeb0bc;border-radius:1px;background:#eceef4"><div style="position:absolute;left:1.3px;top:1.3px;width:6.4px;height:6.4px;background:linear-gradient(#b8ccf4,#6a8ee0 60%,#5a7ed4);box-shadow:0 0 0 0.7px #3c5cbc"></div></div>
<div class="a" style="left:1021.85px;top:332.78px;width:11px;height:11px;border:1px solid #aeb0bc;border-radius:1px;background:#eceef4"><div style="position:absolute;left:1.3px;top:1.3px;width:6.4px;height:6.4px;background:linear-gradient(#b8ccf4,#6a8ee0 60%,#5a7ed4);box-shadow:0 0 0 0.7px #3c5cbc"></div></div>
<div class="a" style="left:335.3px;top:365.42px;width:13px;height:1.1px;background:#d6d6dc"></div>
<div class="a" style="left:348.3px;top:365.42px;width:777.3px;height:1.1px;background:#d2e2d2"></div>
<div class="t" style="left:350.49px;top:353.74px;font-size:10px;color:#0a0a0a;transform:scaleX(0.899);transform-origin:0 0">INSURANCE</div>
<div class="t" style="left:453.55px;top:353.74px;font-size:10px;color:#0a0a0a">1</div>
<div class="t" style="left:501.19px;top:353.74px;font-size:10px;color:#0a0a0a;transform:scaleX(0.899);transform-origin:0 0">INSURANCE</div>
<div class="t" style="left:1062.20px;top:353.74px;font-size:10px;color:#0a0a0a;letter-spacing:-0.01px">No Effect</div>
<div class="a" style="left:626.50px;top:351.24px;width:11px;height:11px;border:1px solid #aeb0bc;border-radius:1px;background:#eceef4"><div style="position:absolute;left:1.3px;top:1.3px;width:6.4px;height:6.4px;background:linear-gradient(#b8ccf4,#6a8ee0 60%,#5a7ed4);box-shadow:0 0 0 0.7px #3c5cbc"></div></div>
<div class="a" style="left:692.60px;top:351.24px;width:11px;height:11px;border:1px solid #aeb0bc;border-radius:1px;background:#eceef4"><div style="position:absolute;left:1.3px;top:1.3px;width:6.4px;height:6.4px;background:linear-gradient(#b8ccf4,#6a8ee0 60%,#5a7ed4);box-shadow:0 0 0 0.7px #3c5cbc"></div></div>
<div class="a" style="left:758.60px;top:351.24px;width:11px;height:11px;border:1px solid #aeb0bc;border-radius:1px;background:#eceef4"><div style="position:absolute;left:1.3px;top:1.3px;width:6.4px;height:6.4px;background:linear-gradient(#b8ccf4,#6a8ee0 60%,#5a7ed4);box-shadow:0 0 0 0.7px #3c5cbc"></div></div>
<div class="a" style="left:824.60px;top:351.24px;width:11px;height:11px;border:1px solid #aeb0bc;border-radius:1px;background:#eceef4"><div style="position:absolute;left:1.3px;top:1.3px;width:6.4px;height:6.4px;background:linear-gradient(#b8ccf4,#6a8ee0 60%,#5a7ed4);box-shadow:0 0 0 0.7px #3c5cbc"></div></div>
<div class="a" style="left:890.50px;top:351.24px;width:11px;height:11px;border:1px solid #aeb0bc;border-radius:1px;background:#eceef4"><div style="position:absolute;left:1.3px;top:1.3px;width:6.4px;height:6.4px;background:linear-gradient(#b8ccf4,#6a8ee0 60%,#5a7ed4);box-shadow:0 0 0 0.7px #3c5cbc"></div></div>
<div class="a" style="left:956.20px;top:351.24px;width:11px;height:11px;border:1px solid #aeb0bc;border-radius:1px;background:#eceef4"><div style="position:absolute;left:1.3px;top:1.3px;width:6.4px;height:6.4px;background:linear-gradient(#b8ccf4,#6a8ee0 60%,#5a7ed4);box-shadow:0 0 0 0.7px #3c5cbc"></div></div>
<div class="a" style="left:1021.85px;top:351.24px;width:11px;height:11px;border:1px solid #aeb0bc;border-radius:1px;background:#eceef4"><div style="position:absolute;left:1.3px;top:1.3px;width:6.4px;height:6.4px;background:linear-gradient(#b8ccf4,#6a8ee0 60%,#5a7ed4);box-shadow:0 0 0 0.7px #3c5cbc"></div></div>
<div class="a" style="left:335.3px;top:383.88px;width:13px;height:1.1px;background:#d6d6dc"></div>
<div class="a" style="left:348.3px;top:383.88px;width:777.3px;height:1.1px;background:#d2e2d2"></div>
<div class="t" style="left:350.58px;top:372.20px;font-size:10px;color:#0a0a0a;transform:scaleX(0.899);transform-origin:0 0">KWSP</div>
<div class="t" style="left:453.55px;top:372.20px;font-size:10px;color:#0a0a0a">1</div>
<div class="t" style="left:501.28px;top:372.20px;font-size:10px;color:#0a0a0a;transform:scaleX(0.899);transform-origin:0 0">KWSP</div>
<div class="t" style="left:1062.20px;top:372.20px;font-size:10px;color:#0a0a0a;letter-spacing:-0.01px">No Effect</div>
<div class="a" style="left:626.50px;top:369.70px;width:11px;height:11px;border:1px solid #aeb0bc;border-radius:1px;background:#eceef4"><div style="position:absolute;left:1.3px;top:1.3px;width:6.4px;height:6.4px;background:linear-gradient(#b8ccf4,#6a8ee0 60%,#5a7ed4);box-shadow:0 0 0 0.7px #3c5cbc"></div></div>
<div class="a" style="left:692.60px;top:369.70px;width:11px;height:11px;border:1px solid #aeb0bc;border-radius:1px;background:#eceef4"><div style="position:absolute;left:1.3px;top:1.3px;width:6.4px;height:6.4px;background:linear-gradient(#b8ccf4,#6a8ee0 60%,#5a7ed4);box-shadow:0 0 0 0.7px #3c5cbc"></div></div>
<div class="a" style="left:758.60px;top:369.70px;width:11px;height:11px;border:1px solid #aeb0bc;border-radius:1px;background:#eceef4"><div style="position:absolute;left:1.3px;top:1.3px;width:6.4px;height:6.4px;background:linear-gradient(#b8ccf4,#6a8ee0 60%,#5a7ed4);box-shadow:0 0 0 0.7px #3c5cbc"></div></div>
<div class="a" style="left:824.60px;top:369.70px;width:11px;height:11px;border:1px solid #aeb0bc;border-radius:1px;background:#eceef4"><div style="position:absolute;left:1.3px;top:1.3px;width:6.4px;height:6.4px;background:linear-gradient(#b8ccf4,#6a8ee0 60%,#5a7ed4);box-shadow:0 0 0 0.7px #3c5cbc"></div></div>
<div class="a" style="left:890.50px;top:369.70px;width:11px;height:11px;border:1px solid #aeb0bc;border-radius:1px;background:#eceef4"><div style="position:absolute;left:1.3px;top:1.3px;width:6.4px;height:6.4px;background:linear-gradient(#b8ccf4,#6a8ee0 60%,#5a7ed4);box-shadow:0 0 0 0.7px #3c5cbc"></div></div>
<div class="a" style="left:956.20px;top:369.70px;width:11px;height:11px;border:1px solid #aeb0bc;border-radius:1px;background:#eceef4"><div style="position:absolute;left:1.3px;top:1.3px;width:6.4px;height:6.4px;background:linear-gradient(#b8ccf4,#6a8ee0 60%,#5a7ed4);box-shadow:0 0 0 0.7px #3c5cbc"></div></div>
<div class="a" style="left:1021.85px;top:369.70px;width:11px;height:11px;border:1px solid #aeb0bc;border-radius:1px;background:#eceef4"><div style="position:absolute;left:1.3px;top:1.3px;width:6.4px;height:6.4px;background:linear-gradient(#b8ccf4,#6a8ee0 60%,#5a7ed4);box-shadow:0 0 0 0.7px #3c5cbc"></div></div>
<div class="a" style="left:335.3px;top:402.34px;width:13px;height:1.1px;background:#d6d6dc"></div>
<div class="a" style="left:348.3px;top:402.34px;width:777.3px;height:1.1px;background:#d2e2d2"></div>
<div class="t" style="left:350.58px;top:390.66px;font-size:10px;color:#0a0a0a;transform:scaleX(0.899);transform-origin:0 0">LAPTOP</div>
<div class="t" style="left:453.55px;top:390.66px;font-size:10px;color:#0a0a0a">1</div>
<div class="t" style="left:501.28px;top:390.66px;font-size:10px;color:#0a0a0a;transform:scaleX(0.899);transform-origin:0 0">LAPTOP</div>
<div class="t" style="left:1062.20px;top:390.66px;font-size:10px;color:#0a0a0a;letter-spacing:-0.01px">No Effect</div>
<div class="a" style="left:626.50px;top:388.16px;width:11px;height:11px;border:1px solid #aeb0bc;border-radius:1px;background:#eceef4"><div style="position:absolute;left:1.3px;top:1.3px;width:6.4px;height:6.4px;background:linear-gradient(#b8ccf4,#6a8ee0 60%,#5a7ed4);box-shadow:0 0 0 0.7px #3c5cbc"></div></div>
<div class="a" style="left:692.60px;top:388.16px;width:11px;height:11px;border:1px solid #aeb0bc;border-radius:1px;background:#eceef4"><div style="position:absolute;left:1.3px;top:1.3px;width:6.4px;height:6.4px;background:linear-gradient(#b8ccf4,#6a8ee0 60%,#5a7ed4);box-shadow:0 0 0 0.7px #3c5cbc"></div></div>
<div class="a" style="left:758.60px;top:388.16px;width:11px;height:11px;border:1px solid #aeb0bc;border-radius:1px;background:#eceef4"><div style="position:absolute;left:1.3px;top:1.3px;width:6.4px;height:6.4px;background:linear-gradient(#b8ccf4,#6a8ee0 60%,#5a7ed4);box-shadow:0 0 0 0.7px #3c5cbc"></div></div>
<div class="a" style="left:824.60px;top:388.16px;width:11px;height:11px;border:1px solid #aeb0bc;border-radius:1px;background:#eceef4"><div style="position:absolute;left:1.3px;top:1.3px;width:6.4px;height:6.4px;background:linear-gradient(#b8ccf4,#6a8ee0 60%,#5a7ed4);box-shadow:0 0 0 0.7px #3c5cbc"></div></div>
<div class="a" style="left:890.50px;top:388.16px;width:11px;height:11px;border:1px solid #aeb0bc;border-radius:1px;background:#eceef4"><div style="position:absolute;left:1.3px;top:1.3px;width:6.4px;height:6.4px;background:linear-gradient(#b8ccf4,#6a8ee0 60%,#5a7ed4);box-shadow:0 0 0 0.7px #3c5cbc"></div></div>
<div class="a" style="left:956.20px;top:388.16px;width:11px;height:11px;border:1px solid #aeb0bc;border-radius:1px;background:#eceef4"><div style="position:absolute;left:1.3px;top:1.3px;width:6.4px;height:6.4px;background:linear-gradient(#b8ccf4,#6a8ee0 60%,#5a7ed4);box-shadow:0 0 0 0.7px #3c5cbc"></div></div>
<div class="a" style="left:1021.85px;top:388.16px;width:11px;height:11px;border:1px solid #aeb0bc;border-radius:1px;background:#eceef4"><div style="position:absolute;left:1.3px;top:1.3px;width:6.4px;height:6.4px;background:linear-gradient(#b8ccf4,#6a8ee0 60%,#5a7ed4);box-shadow:0 0 0 0.7px #3c5cbc"></div></div>
<div class="a" style="left:335.3px;top:420.80px;width:13px;height:1.1px;background:#d6d6dc"></div>
<div class="a" style="left:348.3px;top:420.80px;width:777.3px;height:1.1px;background:#d2e2d2"></div>
<div class="t" style="left:350.58px;top:409.12px;font-size:10px;color:#0a0a0a;transform:scaleX(0.899);transform-origin:0 0">LEVY</div>
<div class="t" style="left:453.55px;top:409.12px;font-size:10px;color:#0a0a0a">1</div>
<div class="t" style="left:501.28px;top:409.12px;font-size:10px;color:#0a0a0a;transform:scaleX(0.899);transform-origin:0 0">LEVY</div>
<div class="t" style="left:1062.20px;top:409.12px;font-size:10px;color:#0a0a0a;letter-spacing:-0.01px">No Effect</div>
<div class="a" style="left:626.50px;top:406.62px;width:11px;height:11px;border:1px solid #aeb0bc;border-radius:1px;background:#eceef4"><div style="position:absolute;left:1.3px;top:1.3px;width:6.4px;height:6.4px;background:linear-gradient(#b8ccf4,#6a8ee0 60%,#5a7ed4);box-shadow:0 0 0 0.7px #3c5cbc"></div></div>
<div class="a" style="left:692.60px;top:406.62px;width:11px;height:11px;border:1px solid #aeb0bc;border-radius:1px;background:#eceef4"><div style="position:absolute;left:1.3px;top:1.3px;width:6.4px;height:6.4px;background:linear-gradient(#b8ccf4,#6a8ee0 60%,#5a7ed4);box-shadow:0 0 0 0.7px #3c5cbc"></div></div>
<div class="a" style="left:758.60px;top:406.62px;width:11px;height:11px;border:1px solid #aeb0bc;border-radius:1px;background:#eceef4"><div style="position:absolute;left:1.3px;top:1.3px;width:6.4px;height:6.4px;background:linear-gradient(#b8ccf4,#6a8ee0 60%,#5a7ed4);box-shadow:0 0 0 0.7px #3c5cbc"></div></div>
<div class="a" style="left:824.60px;top:406.62px;width:11px;height:11px;border:1px solid #aeb0bc;border-radius:1px;background:#eceef4"><div style="position:absolute;left:1.3px;top:1.3px;width:6.4px;height:6.4px;background:linear-gradient(#b8ccf4,#6a8ee0 60%,#5a7ed4);box-shadow:0 0 0 0.7px #3c5cbc"></div></div>
<div class="a" style="left:890.50px;top:406.62px;width:11px;height:11px;border:1px solid #aeb0bc;border-radius:1px;background:#eceef4"><div style="position:absolute;left:1.3px;top:1.3px;width:6.4px;height:6.4px;background:linear-gradient(#b8ccf4,#6a8ee0 60%,#5a7ed4);box-shadow:0 0 0 0.7px #3c5cbc"></div></div>
<div class="a" style="left:956.20px;top:406.62px;width:11px;height:11px;border:1px solid #aeb0bc;border-radius:1px;background:#eceef4"><div style="position:absolute;left:1.3px;top:1.3px;width:6.4px;height:6.4px;background:linear-gradient(#b8ccf4,#6a8ee0 60%,#5a7ed4);box-shadow:0 0 0 0.7px #3c5cbc"></div></div>
<div class="a" style="left:1021.85px;top:406.62px;width:11px;height:11px;border:1px solid #aeb0bc;border-radius:1px;background:#eceef4"><div style="position:absolute;left:1.3px;top:1.3px;width:6.4px;height:6.4px;background:linear-gradient(#b8ccf4,#6a8ee0 60%,#5a7ed4);box-shadow:0 0 0 0.7px #3c5cbc"></div></div>
<div class="a" style="left:335.3px;top:439.26px;width:13px;height:1.1px;background:#d6d6dc"></div>
<div class="a" style="left:348.3px;top:439.26px;width:777.3px;height:1.1px;background:#d2e2d2"></div>
<div class="t" style="left:350.58px;top:427.58px;font-size:10px;color:#0a0a0a;transform:scaleX(0.899);transform-origin:0 0">LHDN</div>
<div class="t" style="left:453.55px;top:427.58px;font-size:10px;color:#0a0a0a">1</div>
<div class="t" style="left:501.28px;top:427.58px;font-size:10px;color:#0a0a0a;transform:scaleX(0.899);transform-origin:0 0">LHDN</div>
<div class="t" style="left:1062.20px;top:427.58px;font-size:10px;color:#0a0a0a;letter-spacing:-0.01px">No Effect</div>
<div class="a" style="left:626.50px;top:425.08px;width:11px;height:11px;border:1px solid #aeb0bc;border-radius:1px;background:#eceef4"><div style="position:absolute;left:1.3px;top:1.3px;width:6.4px;height:6.4px;background:linear-gradient(#b8ccf4,#6a8ee0 60%,#5a7ed4);box-shadow:0 0 0 0.7px #3c5cbc"></div></div>
<div class="a" style="left:692.60px;top:425.08px;width:11px;height:11px;border:1px solid #aeb0bc;border-radius:1px;background:#eceef4"><div style="position:absolute;left:1.3px;top:1.3px;width:6.4px;height:6.4px;background:linear-gradient(#b8ccf4,#6a8ee0 60%,#5a7ed4);box-shadow:0 0 0 0.7px #3c5cbc"></div></div>
<div class="a" style="left:758.60px;top:425.08px;width:11px;height:11px;border:1px solid #aeb0bc;border-radius:1px;background:#eceef4"><div style="position:absolute;left:1.3px;top:1.3px;width:6.4px;height:6.4px;background:linear-gradient(#b8ccf4,#6a8ee0 60%,#5a7ed4);box-shadow:0 0 0 0.7px #3c5cbc"></div></div>
<div class="a" style="left:824.60px;top:425.08px;width:11px;height:11px;border:1px solid #aeb0bc;border-radius:1px;background:#eceef4"><div style="position:absolute;left:1.3px;top:1.3px;width:6.4px;height:6.4px;background:linear-gradient(#b8ccf4,#6a8ee0 60%,#5a7ed4);box-shadow:0 0 0 0.7px #3c5cbc"></div></div>
<div class="a" style="left:890.50px;top:425.08px;width:11px;height:11px;border:1px solid #aeb0bc;border-radius:1px;background:#eceef4"><div style="position:absolute;left:1.3px;top:1.3px;width:6.4px;height:6.4px;background:linear-gradient(#b8ccf4,#6a8ee0 60%,#5a7ed4);box-shadow:0 0 0 0.7px #3c5cbc"></div></div>
<div class="a" style="left:956.20px;top:425.08px;width:11px;height:11px;border:1px solid #aeb0bc;border-radius:1px;background:#eceef4"><div style="position:absolute;left:1.3px;top:1.3px;width:6.4px;height:6.4px;background:linear-gradient(#b8ccf4,#6a8ee0 60%,#5a7ed4);box-shadow:0 0 0 0.7px #3c5cbc"></div></div>
<div class="a" style="left:1021.85px;top:425.08px;width:11px;height:11px;border:1px solid #aeb0bc;border-radius:1px;background:#eceef4"><div style="position:absolute;left:1.3px;top:1.3px;width:6.4px;height:6.4px;background:linear-gradient(#b8ccf4,#6a8ee0 60%,#5a7ed4);box-shadow:0 0 0 0.7px #3c5cbc"></div></div>
<div class="a" style="left:335.3px;top:457.72px;width:13px;height:1.1px;background:#d6d6dc"></div>
<div class="a" style="left:348.3px;top:457.72px;width:777.3px;height:1.1px;background:#d2e2d2"></div>
<div class="t" style="left:350.58px;top:446.04px;font-size:10px;color:#0a0a0a;transform:scaleX(0.899);transform-origin:0 0">LOAN</div>
<div class="t" style="left:453.55px;top:446.04px;font-size:10px;color:#0a0a0a">1</div>
<div class="t" style="left:501.28px;top:446.04px;font-size:10px;color:#0a0a0a;transform:scaleX(0.899);transform-origin:0 0">LOAN</div>
<div class="t" style="left:1062.20px;top:446.04px;font-size:10px;color:#0a0a0a;letter-spacing:-0.01px">No Effect</div>
<div class="a" style="left:626.50px;top:443.54px;width:11px;height:11px;border:1px solid #aeb0bc;border-radius:1px;background:#eceef4"><div style="position:absolute;left:1.3px;top:1.3px;width:6.4px;height:6.4px;background:linear-gradient(#b8ccf4,#6a8ee0 60%,#5a7ed4);box-shadow:0 0 0 0.7px #3c5cbc"></div></div>
<div class="a" style="left:692.60px;top:443.54px;width:11px;height:11px;border:1px solid #aeb0bc;border-radius:1px;background:#eceef4"><div style="position:absolute;left:1.3px;top:1.3px;width:6.4px;height:6.4px;background:linear-gradient(#b8ccf4,#6a8ee0 60%,#5a7ed4);box-shadow:0 0 0 0.7px #3c5cbc"></div></div>
<div class="a" style="left:758.60px;top:443.54px;width:11px;height:11px;border:1px solid #aeb0bc;border-radius:1px;background:#eceef4"><div style="position:absolute;left:1.3px;top:1.3px;width:6.4px;height:6.4px;background:linear-gradient(#b8ccf4,#6a8ee0 60%,#5a7ed4);box-shadow:0 0 0 0.7px #3c5cbc"></div></div>
<div class="a" style="left:824.60px;top:443.54px;width:11px;height:11px;border:1px solid #aeb0bc;border-radius:1px;background:#eceef4"><div style="position:absolute;left:1.3px;top:1.3px;width:6.4px;height:6.4px;background:linear-gradient(#b8ccf4,#6a8ee0 60%,#5a7ed4);box-shadow:0 0 0 0.7px #3c5cbc"></div></div>
<div class="a" style="left:890.50px;top:443.54px;width:11px;height:11px;border:1px solid #aeb0bc;border-radius:1px;background:#eceef4"><div style="position:absolute;left:1.3px;top:1.3px;width:6.4px;height:6.4px;background:linear-gradient(#b8ccf4,#6a8ee0 60%,#5a7ed4);box-shadow:0 0 0 0.7px #3c5cbc"></div></div>
<div class="a" style="left:956.20px;top:443.54px;width:11px;height:11px;border:1px solid #aeb0bc;border-radius:1px;background:#eceef4"><div style="position:absolute;left:1.3px;top:1.3px;width:6.4px;height:6.4px;background:linear-gradient(#b8ccf4,#6a8ee0 60%,#5a7ed4);box-shadow:0 0 0 0.7px #3c5cbc"></div></div>
<div class="a" style="left:1021.85px;top:443.54px;width:11px;height:11px;border:1px solid #aeb0bc;border-radius:1px;background:#eceef4"><div style="position:absolute;left:1.3px;top:1.3px;width:6.4px;height:6.4px;background:linear-gradient(#b8ccf4,#6a8ee0 60%,#5a7ed4);box-shadow:0 0 0 0.7px #3c5cbc"></div></div>
<div class="a" style="left:335.3px;top:476.18px;width:13px;height:1.1px;background:#d6d6dc"></div>
<div class="a" style="left:348.3px;top:476.18px;width:777.3px;height:1.1px;background:#d2e2d2"></div>
<div class="t" style="left:350.58px;top:464.50px;font-size:10px;color:#0a0a0a;transform:scaleX(0.899);transform-origin:0 0">LOANREPAY</div>
<div class="t" style="left:453.55px;top:464.50px;font-size:10px;color:#0a0a0a">1</div>
<div class="t" style="left:501.28px;top:464.50px;font-size:10px;color:#0a0a0a;transform:scaleX(0.899);transform-origin:0 0">LOAN REPAYMENT</div>
<div class="t" style="left:1062.20px;top:464.50px;font-size:10px;color:#0a0a0a;letter-spacing:-0.01px">No Effect</div>
<div class="a" style="left:626.50px;top:462.00px;width:11px;height:11px;border:1px solid #aeb0bc;border-radius:1px;background:#eceef4"><div style="position:absolute;left:1.3px;top:1.3px;width:6.4px;height:6.4px;background:linear-gradient(#b8ccf4,#6a8ee0 60%,#5a7ed4);box-shadow:0 0 0 0.7px #3c5cbc"></div></div>
<div class="a" style="left:692.60px;top:462.00px;width:11px;height:11px;border:1px solid #aeb0bc;border-radius:1px;background:#eceef4"><div style="position:absolute;left:1.3px;top:1.3px;width:6.4px;height:6.4px;background:linear-gradient(#b8ccf4,#6a8ee0 60%,#5a7ed4);box-shadow:0 0 0 0.7px #3c5cbc"></div></div>
<div class="a" style="left:758.60px;top:462.00px;width:11px;height:11px;border:1px solid #aeb0bc;border-radius:1px;background:#eceef4"><div style="position:absolute;left:1.3px;top:1.3px;width:6.4px;height:6.4px;background:linear-gradient(#b8ccf4,#6a8ee0 60%,#5a7ed4);box-shadow:0 0 0 0.7px #3c5cbc"></div></div>
<div class="a" style="left:824.60px;top:462.00px;width:11px;height:11px;border:1px solid #aeb0bc;border-radius:1px;background:#eceef4"><div style="position:absolute;left:1.3px;top:1.3px;width:6.4px;height:6.4px;background:linear-gradient(#b8ccf4,#6a8ee0 60%,#5a7ed4);box-shadow:0 0 0 0.7px #3c5cbc"></div></div>
<div class="a" style="left:890.50px;top:462.00px;width:11px;height:11px;border:1px solid #aeb0bc;border-radius:1px;background:#eceef4"><div style="position:absolute;left:1.3px;top:1.3px;width:6.4px;height:6.4px;background:linear-gradient(#b8ccf4,#6a8ee0 60%,#5a7ed4);box-shadow:0 0 0 0.7px #3c5cbc"></div></div>
<div class="a" style="left:956.20px;top:462.00px;width:11px;height:11px;border:1px solid #aeb0bc;border-radius:1px;background:#eceef4"><div style="position:absolute;left:1.3px;top:1.3px;width:6.4px;height:6.4px;background:linear-gradient(#b8ccf4,#6a8ee0 60%,#5a7ed4);box-shadow:0 0 0 0.7px #3c5cbc"></div></div>
<div class="a" style="left:1021.85px;top:462.00px;width:11px;height:11px;border:1px solid #aeb0bc;border-radius:1px;background:#eceef4"><div style="position:absolute;left:1.3px;top:1.3px;width:6.4px;height:6.4px;background:linear-gradient(#b8ccf4,#6a8ee0 60%,#5a7ed4);box-shadow:0 0 0 0.7px #3c5cbc"></div></div>
<div class="a" style="left:335.3px;top:494.64px;width:13px;height:1.1px;background:#d6d6dc"></div>
<div class="a" style="left:348.3px;top:494.64px;width:777.3px;height:1.1px;background:#d2e2d2"></div>
<div class="t" style="left:350.58px;top:482.96px;font-size:10px;color:#0a0a0a;transform:scaleX(0.899);transform-origin:0 0">PTPTN</div>
<div class="t" style="left:453.55px;top:482.96px;font-size:10px;color:#0a0a0a">1</div>
<div class="t" style="left:501.28px;top:482.96px;font-size:10px;color:#0a0a0a;transform:scaleX(0.899);transform-origin:0 0">PTPTN</div>
<div class="t" style="left:1062.20px;top:482.96px;font-size:10px;color:#0a0a0a;letter-spacing:-0.01px">No Effect</div>
<div class="a" style="left:626.50px;top:480.46px;width:11px;height:11px;border:1px solid #aeb0bc;border-radius:1px;background:#eceef4"><div style="position:absolute;left:1.3px;top:1.3px;width:6.4px;height:6.4px;background:linear-gradient(#b8ccf4,#6a8ee0 60%,#5a7ed4);box-shadow:0 0 0 0.7px #3c5cbc"></div></div>
<div class="a" style="left:692.60px;top:480.46px;width:11px;height:11px;border:1px solid #aeb0bc;border-radius:1px;background:#eceef4"><div style="position:absolute;left:1.3px;top:1.3px;width:6.4px;height:6.4px;background:linear-gradient(#b8ccf4,#6a8ee0 60%,#5a7ed4);box-shadow:0 0 0 0.7px #3c5cbc"></div></div>
<div class="a" style="left:758.60px;top:480.46px;width:11px;height:11px;border:1px solid #aeb0bc;border-radius:1px;background:#eceef4"><div style="position:absolute;left:1.3px;top:1.3px;width:6.4px;height:6.4px;background:linear-gradient(#b8ccf4,#6a8ee0 60%,#5a7ed4);box-shadow:0 0 0 0.7px #3c5cbc"></div></div>
<div class="a" style="left:824.60px;top:480.46px;width:11px;height:11px;border:1px solid #aeb0bc;border-radius:1px;background:#eceef4"><div style="position:absolute;left:1.3px;top:1.3px;width:6.4px;height:6.4px;background:linear-gradient(#b8ccf4,#6a8ee0 60%,#5a7ed4);box-shadow:0 0 0 0.7px #3c5cbc"></div></div>
<div class="a" style="left:890.50px;top:480.46px;width:11px;height:11px;border:1px solid #aeb0bc;border-radius:1px;background:#eceef4"><div style="position:absolute;left:1.3px;top:1.3px;width:6.4px;height:6.4px;background:linear-gradient(#b8ccf4,#6a8ee0 60%,#5a7ed4);box-shadow:0 0 0 0.7px #3c5cbc"></div></div>
<div class="a" style="left:956.20px;top:480.46px;width:11px;height:11px;border:1px solid #aeb0bc;border-radius:1px;background:#eceef4"><div style="position:absolute;left:1.3px;top:1.3px;width:6.4px;height:6.4px;background:linear-gradient(#b8ccf4,#6a8ee0 60%,#5a7ed4);box-shadow:0 0 0 0.7px #3c5cbc"></div></div>
<div class="a" style="left:1021.85px;top:480.46px;width:11px;height:11px;border:1px solid #aeb0bc;border-radius:1px;background:#eceef4"><div style="position:absolute;left:1.3px;top:1.3px;width:6.4px;height:6.4px;background:linear-gradient(#b8ccf4,#6a8ee0 60%,#5a7ed4);box-shadow:0 0 0 0.7px #3c5cbc"></div></div>
<div class="a" style="left:335.3px;top:513.10px;width:13px;height:1.1px;background:#d6d6dc"></div>
<div class="a" style="left:348.3px;top:513.10px;width:777.3px;height:1.1px;background:#d2e2d2"></div>
<div class="t" style="left:350.90px;top:501.42px;font-size:10px;color:#0a0a0a;transform:scaleX(0.899);transform-origin:0 0">SALARY</div>
<div class="t" style="left:453.55px;top:501.42px;font-size:10px;color:#0a0a0a">1</div>
<div class="t" style="left:501.60px;top:501.42px;font-size:10px;color:#0a0a0a;transform:scaleX(0.899);transform-origin:0 0">SALARY</div>
<div class="t" style="left:1062.28px;top:501.42px;font-size:10px;color:#0a0a0a;transform:scaleX(0.897);transform-origin:0 0">Basic</div>
<div class="a" style="left:626.50px;top:498.92px;width:11px;height:11px;border:1px solid #b4b4be;background:linear-gradient(#e4e4ea,#fafafc)"></div>
<svg class="a" style="left:626.80px;top:496.42px" width="12" height="13" viewBox="0 0 12 13"><path d="M1.4 7.4 L4.4 11.6 L10.8 1.2" stroke="#24243a" stroke-width="1.7" fill="none"/></svg>
<div class="a" style="left:692.60px;top:498.92px;width:11px;height:11px;border:1px solid #b4b4be;background:linear-gradient(#e4e4ea,#fafafc)"></div>
<svg class="a" style="left:692.90px;top:496.42px" width="12" height="13" viewBox="0 0 12 13"><path d="M1.4 7.4 L4.4 11.6 L10.8 1.2" stroke="#24243a" stroke-width="1.7" fill="none"/></svg>
<div class="a" style="left:758.60px;top:498.92px;width:11px;height:11px;border:1px solid #aeb0bc;border-radius:1px;background:#eceef4"><div style="position:absolute;left:1.3px;top:1.3px;width:6.4px;height:6.4px;background:linear-gradient(#b8ccf4,#6a8ee0 60%,#5a7ed4);box-shadow:0 0 0 0.7px #3c5cbc"></div></div>
<div class="a" style="left:824.60px;top:498.92px;width:11px;height:11px;border:1px solid #b4b4be;background:linear-gradient(#e4e4ea,#fafafc)"></div>
<svg class="a" style="left:824.90px;top:496.42px" width="12" height="13" viewBox="0 0 12 13"><path d="M1.4 7.4 L4.4 11.6 L10.8 1.2" stroke="#24243a" stroke-width="1.7" fill="none"/></svg>
<div class="a" style="left:890.50px;top:498.92px;width:11px;height:11px;border:1px solid #aeb0bc;border-radius:1px;background:#eceef4"><div style="position:absolute;left:1.3px;top:1.3px;width:6.4px;height:6.4px;background:linear-gradient(#b8ccf4,#6a8ee0 60%,#5a7ed4);box-shadow:0 0 0 0.7px #3c5cbc"></div></div>
<div class="a" style="left:956.20px;top:498.92px;width:11px;height:11px;border:1px solid #aeb0bc;border-radius:1px;background:#eceef4"><div style="position:absolute;left:1.3px;top:1.3px;width:6.4px;height:6.4px;background:linear-gradient(#b8ccf4,#6a8ee0 60%,#5a7ed4);box-shadow:0 0 0 0.7px #3c5cbc"></div></div>
<div class="a" style="left:1021.85px;top:498.92px;width:11px;height:11px;border:1px solid #aeb0bc;border-radius:1px;background:#eceef4"><div style="position:absolute;left:1.3px;top:1.3px;width:6.4px;height:6.4px;background:linear-gradient(#b8ccf4,#6a8ee0 60%,#5a7ed4);box-shadow:0 0 0 0.7px #3c5cbc"></div></div>
<div class="a" style="left:335.3px;top:531.56px;width:13px;height:1.1px;background:#d6d6dc"></div>
<div class="a" style="left:348.3px;top:531.56px;width:777.3px;height:1.1px;background:#d2e2d2"></div>
<div class="t" style="left:350.90px;top:519.88px;font-size:10px;color:#0a0a0a;transform:scaleX(0.899);transform-origin:0 0">SOCSO</div>
<div class="t" style="left:453.55px;top:519.88px;font-size:10px;color:#0a0a0a">1</div>
<div class="t" style="left:501.60px;top:519.88px;font-size:10px;color:#0a0a0a;transform:scaleX(0.899);transform-origin:0 0">SOCSO</div>
<div class="t" style="left:1062.28px;top:519.88px;font-size:10px;color:#0a0a0a;transform:scaleX(0.897);transform-origin:0 0">Basic</div>
<div class="a" style="left:626.50px;top:517.38px;width:11px;height:11px;border:1px solid #aeb0bc;border-radius:1px;background:#eceef4"><div style="position:absolute;left:1.3px;top:1.3px;width:6.4px;height:6.4px;background:linear-gradient(#b8ccf4,#6a8ee0 60%,#5a7ed4);box-shadow:0 0 0 0.7px #3c5cbc"></div></div>
<div class="a" style="left:692.60px;top:517.38px;width:11px;height:11px;border:1px solid #aeb0bc;border-radius:1px;background:#eceef4"><div style="position:absolute;left:1.3px;top:1.3px;width:6.4px;height:6.4px;background:linear-gradient(#b8ccf4,#6a8ee0 60%,#5a7ed4);box-shadow:0 0 0 0.7px #3c5cbc"></div></div>
<div class="a" style="left:758.60px;top:517.38px;width:11px;height:11px;border:1px solid #aeb0bc;border-radius:1px;background:#eceef4"><div style="position:absolute;left:1.3px;top:1.3px;width:6.4px;height:6.4px;background:linear-gradient(#b8ccf4,#6a8ee0 60%,#5a7ed4);box-shadow:0 0 0 0.7px #3c5cbc"></div></div>
<div class="a" style="left:824.60px;top:517.38px;width:11px;height:11px;border:1px solid #aeb0bc;border-radius:1px;background:#eceef4"><div style="position:absolute;left:1.3px;top:1.3px;width:6.4px;height:6.4px;background:linear-gradient(#b8ccf4,#6a8ee0 60%,#5a7ed4);box-shadow:0 0 0 0.7px #3c5cbc"></div></div>
<div class="a" style="left:890.50px;top:517.38px;width:11px;height:11px;border:1px solid #aeb0bc;border-radius:1px;background:#eceef4"><div style="position:absolute;left:1.3px;top:1.3px;width:6.4px;height:6.4px;background:linear-gradient(#b8ccf4,#6a8ee0 60%,#5a7ed4);box-shadow:0 0 0 0.7px #3c5cbc"></div></div>
<div class="a" style="left:956.20px;top:517.38px;width:11px;height:11px;border:1px solid #aeb0bc;border-radius:1px;background:#eceef4"><div style="position:absolute;left:1.3px;top:1.3px;width:6.4px;height:6.4px;background:linear-gradient(#b8ccf4,#6a8ee0 60%,#5a7ed4);box-shadow:0 0 0 0.7px #3c5cbc"></div></div>
<div class="a" style="left:1021.85px;top:517.38px;width:11px;height:11px;border:1px solid #aeb0bc;border-radius:1px;background:#eceef4"><div style="position:absolute;left:1.3px;top:1.3px;width:6.4px;height:6.4px;background:linear-gradient(#b8ccf4,#6a8ee0 60%,#5a7ed4);box-shadow:0 0 0 0.7px #3c5cbc"></div></div>
<div class="a" style="left:335.3px;top:550.02px;width:13px;height:1.1px;background:#d6d6dc"></div>
<div class="a" style="left:348.3px;top:550.02px;width:777.3px;height:1.1px;background:#d2e2d2"></div>
<div class="t" style="left:350.90px;top:538.34px;font-size:10px;color:#0a0a0a;transform:scaleX(0.899);transform-origin:0 0">STUDYLOAN</div>
<div class="t" style="left:453.55px;top:538.34px;font-size:10px;color:#0a0a0a">1</div>
<div class="t" style="left:501.60px;top:538.34px;font-size:10px;color:#0a0a0a;transform:scaleX(0.899);transform-origin:0 0">STUDY LOAN</div>
<div class="t" style="left:1062.20px;top:538.34px;font-size:10px;color:#0a0a0a;letter-spacing:-0.01px">No Effect</div>
<div class="a" style="left:626.50px;top:535.84px;width:11px;height:11px;border:1px solid #aeb0bc;border-radius:1px;background:#eceef4"><div style="position:absolute;left:1.3px;top:1.3px;width:6.4px;height:6.4px;background:linear-gradient(#b8ccf4,#6a8ee0 60%,#5a7ed4);box-shadow:0 0 0 0.7px #3c5cbc"></div></div>
<div class="a" style="left:692.60px;top:535.84px;width:11px;height:11px;border:1px solid #aeb0bc;border-radius:1px;background:#eceef4"><div style="position:absolute;left:1.3px;top:1.3px;width:6.4px;height:6.4px;background:linear-gradient(#b8ccf4,#6a8ee0 60%,#5a7ed4);box-shadow:0 0 0 0.7px #3c5cbc"></div></div>
<div class="a" style="left:758.60px;top:535.84px;width:11px;height:11px;border:1px solid #aeb0bc;border-radius:1px;background:#eceef4"><div style="position:absolute;left:1.3px;top:1.3px;width:6.4px;height:6.4px;background:linear-gradient(#b8ccf4,#6a8ee0 60%,#5a7ed4);box-shadow:0 0 0 0.7px #3c5cbc"></div></div>
<div class="a" style="left:824.60px;top:535.84px;width:11px;height:11px;border:1px solid #aeb0bc;border-radius:1px;background:#eceef4"><div style="position:absolute;left:1.3px;top:1.3px;width:6.4px;height:6.4px;background:linear-gradient(#b8ccf4,#6a8ee0 60%,#5a7ed4);box-shadow:0 0 0 0.7px #3c5cbc"></div></div>
<div class="a" style="left:890.50px;top:535.84px;width:11px;height:11px;border:1px solid #aeb0bc;border-radius:1px;background:#eceef4"><div style="position:absolute;left:1.3px;top:1.3px;width:6.4px;height:6.4px;background:linear-gradient(#b8ccf4,#6a8ee0 60%,#5a7ed4);box-shadow:0 0 0 0.7px #3c5cbc"></div></div>
<div class="a" style="left:956.20px;top:535.84px;width:11px;height:11px;border:1px solid #aeb0bc;border-radius:1px;background:#eceef4"><div style="position:absolute;left:1.3px;top:1.3px;width:6.4px;height:6.4px;background:linear-gradient(#b8ccf4,#6a8ee0 60%,#5a7ed4);box-shadow:0 0 0 0.7px #3c5cbc"></div></div>
<div class="a" style="left:1021.85px;top:535.84px;width:11px;height:11px;border:1px solid #aeb0bc;border-radius:1px;background:#eceef4"><div style="position:absolute;left:1.3px;top:1.3px;width:6.4px;height:6.4px;background:linear-gradient(#b8ccf4,#6a8ee0 60%,#5a7ed4);box-shadow:0 0 0 0.7px #3c5cbc"></div></div>
<div class="a" style="left:335.3px;top:568.48px;width:13px;height:1.1px;background:#d6d6dc"></div>
<div class="a" style="left:348.3px;top:568.48px;width:777.3px;height:1.1px;background:#d2e2d2"></div>
<div class="t" style="left:351.03px;top:556.80px;font-size:10px;color:#0a0a0a;transform:scaleX(0.899);transform-origin:0 0">ZAKAT</div>
<div class="t" style="left:453.55px;top:556.80px;font-size:10px;color:#0a0a0a">1</div>
<div class="t" style="left:501.73px;top:556.80px;font-size:10px;color:#0a0a0a;transform:scaleX(0.899);transform-origin:0 0">ZAKAT</div>
<div class="t" style="left:1062.20px;top:556.80px;font-size:10px;color:#0a0a0a;letter-spacing:-0.01px">No Effect</div>
<div class="a" style="left:626.50px;top:554.30px;width:11px;height:11px;border:1px solid #aeb0bc;border-radius:1px;background:#eceef4"><div style="position:absolute;left:1.3px;top:1.3px;width:6.4px;height:6.4px;background:linear-gradient(#b8ccf4,#6a8ee0 60%,#5a7ed4);box-shadow:0 0 0 0.7px #3c5cbc"></div></div>
<div class="a" style="left:692.60px;top:554.30px;width:11px;height:11px;border:1px solid #aeb0bc;border-radius:1px;background:#eceef4"><div style="position:absolute;left:1.3px;top:1.3px;width:6.4px;height:6.4px;background:linear-gradient(#b8ccf4,#6a8ee0 60%,#5a7ed4);box-shadow:0 0 0 0.7px #3c5cbc"></div></div>
<div class="a" style="left:758.60px;top:554.30px;width:11px;height:11px;border:1px solid #aeb0bc;border-radius:1px;background:#eceef4"><div style="position:absolute;left:1.3px;top:1.3px;width:6.4px;height:6.4px;background:linear-gradient(#b8ccf4,#6a8ee0 60%,#5a7ed4);box-shadow:0 0 0 0.7px #3c5cbc"></div></div>
<div class="a" style="left:824.60px;top:554.30px;width:11px;height:11px;border:1px solid #aeb0bc;border-radius:1px;background:#eceef4"><div style="position:absolute;left:1.3px;top:1.3px;width:6.4px;height:6.4px;background:linear-gradient(#b8ccf4,#6a8ee0 60%,#5a7ed4);box-shadow:0 0 0 0.7px #3c5cbc"></div></div>
<div class="a" style="left:890.50px;top:554.30px;width:11px;height:11px;border:1px solid #aeb0bc;border-radius:1px;background:#eceef4"><div style="position:absolute;left:1.3px;top:1.3px;width:6.4px;height:6.4px;background:linear-gradient(#b8ccf4,#6a8ee0 60%,#5a7ed4);box-shadow:0 0 0 0.7px #3c5cbc"></div></div>
<div class="a" style="left:956.20px;top:554.30px;width:11px;height:11px;border:1px solid #aeb0bc;border-radius:1px;background:#eceef4"><div style="position:absolute;left:1.3px;top:1.3px;width:6.4px;height:6.4px;background:linear-gradient(#b8ccf4,#6a8ee0 60%,#5a7ed4);box-shadow:0 0 0 0.7px #3c5cbc"></div></div>
<div class="a" style="left:1021.85px;top:554.30px;width:11px;height:11px;border:1px solid #aeb0bc;border-radius:1px;background:#eceef4"><div style="position:absolute;left:1.3px;top:1.3px;width:6.4px;height:6.4px;background:linear-gradient(#b8ccf4,#6a8ee0 60%,#5a7ed4);box-shadow:0 0 0 0.7px #3c5cbc"></div></div>
<div class="a" style="left:347.8px;top:329.6px;width:1.1px;height:239.48px;background:#d2e2d2"></div>
<div class="a" style="left:449.8px;top:329.6px;width:1.1px;height:239.48px;background:#d2e2d2"></div>
<div class="a" style="left:497.8px;top:329.6px;width:1.1px;height:239.48px;background:#d2e2d2"></div>
<div class="a" style="left:597.8px;top:329.6px;width:1.1px;height:239.48px;background:#d2e2d2"></div>
<div class="a" style="left:664.0px;top:329.6px;width:1.1px;height:239.48px;background:#d2e2d2"></div>
<div class="a" style="left:730.0px;top:329.6px;width:1.1px;height:239.48px;background:#d2e2d2"></div>
<div class="a" style="left:796.0px;top:329.6px;width:1.1px;height:239.48px;background:#d2e2d2"></div>
<div class="a" style="left:862.0px;top:329.6px;width:1.1px;height:239.48px;background:#d2e2d2"></div>
<div class="a" style="left:927.8px;top:329.6px;width:1.1px;height:239.48px;background:#d2e2d2"></div>
<div class="a" style="left:993.4px;top:329.6px;width:1.1px;height:239.48px;background:#d2e2d2"></div>
<div class="a" style="left:1059.1px;top:329.6px;width:1.1px;height:239.48px;background:#d2e2d2"></div>
<div class="a" style="left:1125.1px;top:329.6px;width:1.1px;height:239.48px;background:#d2e2d2"></div>
<div class="a" style="left:1167.7px;top:261.3px;width:14.6px;height:320.7px;background:#f6f6f8"></div>
<svg class="a" style="left:1171.5px;top:266.5px" width="7" height="4"><path d="M0 4 L3.5 0 L7 4 Z" fill="#6a6a76"/></svg>
<svg class="a" style="left:1171.5px;top:572px" width="7" height="4"><path d="M0 0 L3.5 4 L7 0 Z" fill="#6a6a76"/></svg>
<div class="a" style="left:1172px;top:368px;width:6.2px;height:198px;border:1px solid #b4b4bc;border-radius:4px;background:linear-gradient(90deg,#e2e2e6,#d6d6dc)"></div>
<div class="a" style="left:502px;top:582px;width:665.7px;height:16px;background:#f1f1f3"></div>
<div class="a" style="left:1167.7px;top:582px;width:14.6px;height:16px;background:#e6e6ea"></div>
<svg class="a" style="left:508px;top:586.5px" width="4" height="7"><path d="M4 0 L0 3.5 L4 7 Z" fill="#d2d2d8"/></svg>
<svg class="a" style="left:1158.5px;top:586.5px" width="4" height="7"><path d="M0 0 L4 3.5 L0 7 Z" fill="#d2d2d8"/></svg>
<svg class="a" style="left:337.5px;top:586.5px" width="170" height="8" viewBox="0 0 170 8">
 <g fill="#9a9aa4"><rect x="0.5" y="0.5" width="1.3" height="7"/><path d="M5.3 0.5 L1.8 4 L5.3 7.5 Z M8.8 0.5 L5.3 4 L8.8 7.5 Z"/>
 <path d="M20 0.5 L16.5 4 L20 7.5 Z M23.5 0.5 L20 4 L23.5 7.5 Z"/>
 <path d="M37.5 0.5 L34 4 L37.5 7.5 Z"/></g>
 <g fill="#1a1a24"><path d="M126.5 0.5 L130 4 L126.5 7.5 Z"/>
 <path d="M139.5 0.5 L143 4 L139.5 7.5 Z M143 0.5 L146.5 4 L143 7.5 Z"/>
 <path d="M154.5 0.5 L158 4 L154.5 7.5 Z M158 0.5 L161.5 4 L158 7.5 Z"/><rect x="161.5" y="0.5" width="1.3" height="7"/></g>
</svg>
<div class="t" style="left:386.62px;top:586.30px;font-size:10px;color:#36364e;transform:scaleX(0.977);transform-origin:0 0">Record 1 of 19</div>
</body></html>
